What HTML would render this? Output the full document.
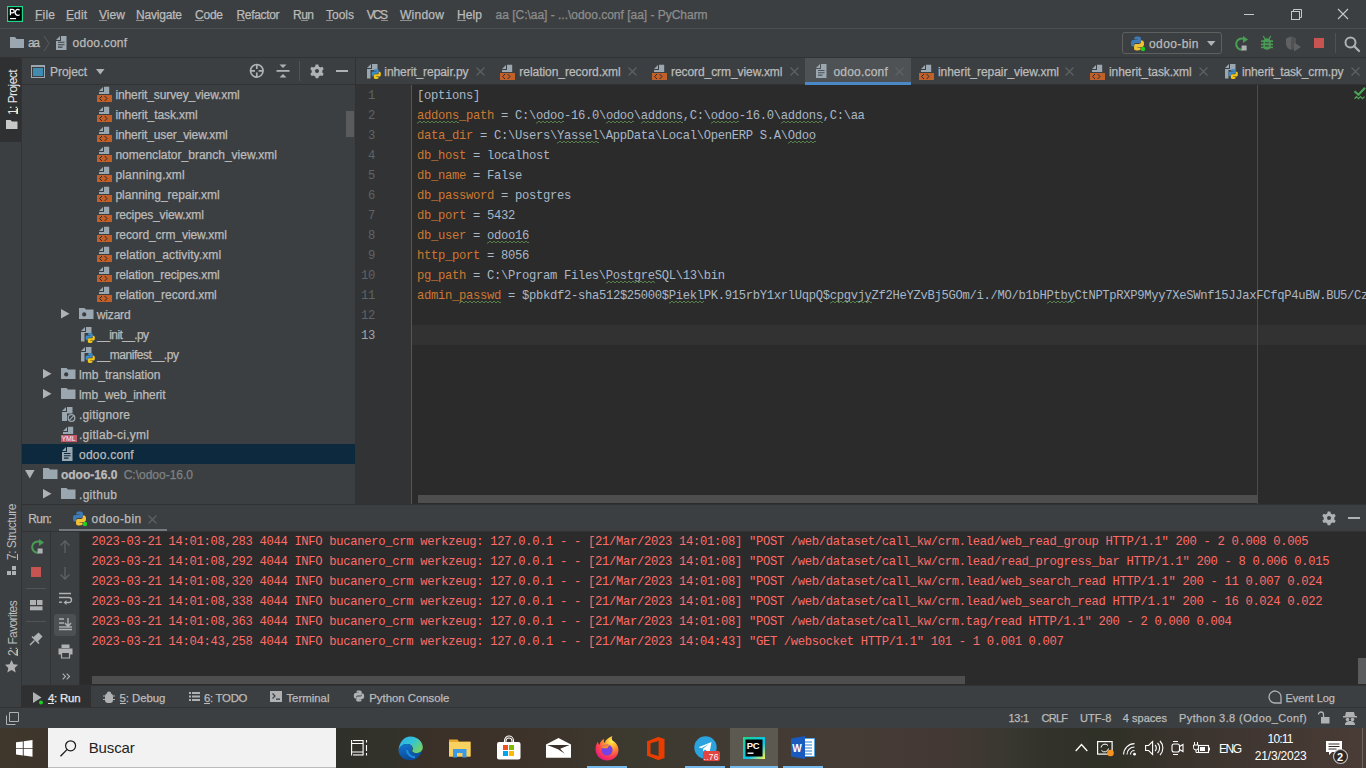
<!DOCTYPE html><html><head><meta charset="utf-8"><style>html,body{margin:0;padding:0;width:1366px;height:768px;overflow:hidden;background:#3c3f41;}.a{position:absolute;}.t{white-space:pre;}.s{-webkit-text-stroke:0.25px currentColor;}svg{overflow:visible;}</style></head><body><div class="a" style="left:0px;top:0px;width:1366px;height:28px;background:#3c3f41;"></div>
<div class="a" style="left:0px;top:28px;width:1366px;height:1px;background:#4b4d4f;"></div>
<svg class="a" style="left:7px;top:6px;" width="16" height="16" viewBox="0 0 16 16"><rect x="0.6" y="0.6" width="14.8" height="14.8" fill="#000" stroke="#21d789" stroke-width="1.2"/><path d="M3.4 9.3V3.4h2.1a1.75 1.75 0 0 1 0 3.5H3.4" fill="none" stroke="#fff" stroke-width="1.3"/><path d="M12.6 4.2A2.6 3 0 1 0 12.6 8.6" fill="none" stroke="#fff" stroke-width="1.3"/><rect x="3" y="12" width="6" height="1.2" fill="#fff"/></svg>
<div class="a t s " style="left:35.0px;top:-5.16px;font:12px/40px 'Liberation Sans',sans-serif;color:#bbbbbb;letter-spacing:0.227px;">File</div>
<div class="a" style="left:35.0px;top:20px;width:7.6px;height:1px;background:#8f8f8f;"></div>
<div class="a t s " style="left:66.0px;top:-5.16px;font:12px/40px 'Liberation Sans',sans-serif;color:#bbbbbb;letter-spacing:0.100px;">Edit</div>
<div class="a" style="left:66.0px;top:20px;width:8.1px;height:1px;background:#8f8f8f;"></div>
<div class="a t s " style="left:99.0px;top:-5.16px;font:12px/40px 'Liberation Sans',sans-serif;color:#bbbbbb;letter-spacing:0.067px;">View</div>
<div class="a" style="left:99.0px;top:20px;width:8.1px;height:1px;background:#8f8f8f;"></div>
<div class="a t s " style="left:136.0px;top:-5.16px;font:12px/40px 'Liberation Sans',sans-serif;color:#bbbbbb;letter-spacing:-0.191px;">Navigate</div>
<div class="a" style="left:136.0px;top:20px;width:8.4px;height:1px;background:#8f8f8f;"></div>
<div class="a t s " style="left:195.0px;top:-5.16px;font:12px/40px 'Liberation Sans',sans-serif;color:#bbbbbb;letter-spacing:-0.227px;">Code</div>
<div class="a" style="left:195.0px;top:20px;width:8.5px;height:1px;background:#8f8f8f;"></div>
<div class="a t s " style="left:236.5px;top:-5.16px;font:12px/40px 'Liberation Sans',sans-serif;color:#bbbbbb;letter-spacing:-0.337px;">Refactor</div>
<div class="a" style="left:236.5px;top:20px;width:8.2px;height:1px;background:#8f8f8f;"></div>
<div class="a t s " style="left:293.0px;top:-5.16px;font:12px/40px 'Liberation Sans',sans-serif;color:#bbbbbb;letter-spacing:-0.510px;">Run</div>
<div class="a" style="left:301.3px;top:20px;width:6.4px;height:1px;background:#8f8f8f;"></div>
<div class="a t s " style="left:326.0px;top:-5.16px;font:12px/40px 'Liberation Sans',sans-serif;color:#bbbbbb;letter-spacing:-0.005px;">Tools</div>
<div class="a" style="left:326.0px;top:20px;width:7.3px;height:1px;background:#8f8f8f;"></div>
<div class="a t s " style="left:366.7px;top:-5.16px;font:12px/40px 'Liberation Sans',sans-serif;color:#bbbbbb;letter-spacing:-1.680px;">VCS</div>
<div class="a" style="left:381.1px;top:20px;width:6.9px;height:1px;background:#8f8f8f;"></div>
<div class="a t s " style="left:400.0px;top:-5.16px;font:12px/40px 'Liberation Sans',sans-serif;color:#bbbbbb;letter-spacing:0.256px;">Window</div>
<div class="a" style="left:400.0px;top:20px;width:11.7px;height:1px;background:#8f8f8f;"></div>
<div class="a t s " style="left:457.0px;top:-5.16px;font:12px/40px 'Liberation Sans',sans-serif;color:#bbbbbb;letter-spacing:0.113px;">Help</div>
<div class="a" style="left:457.0px;top:20px;width:8.8px;height:1px;background:#8f8f8f;"></div>
<div class="a t s " style="left:495.6px;top:-5.16px;font:12px/40px 'Liberation Sans',sans-serif;color:#8d8d8d;letter-spacing:-0.019px;">aa [C:\aa] - ...\odoo.conf [aa] - PyCharm</div>
<svg class="a" style="left:1240px;top:5px;" width="120" height="20" viewBox="0 0 120 20"><line x1="4" y1="9.5" x2="14" y2="9.5" stroke="#c8c8c8" stroke-width="1"/><rect x="51.5" y="6.5" width="8" height="8" fill="none" stroke="#c8c8c8"/><path d="M53.5 6.5V4.5h8v8h-2" fill="none" stroke="#c8c8c8"/><path d="M98 4L108 14M108 4L98 14" stroke="#c8c8c8" stroke-width="1.1"/></svg>
<div class="a" style="left:0px;top:29px;width:1366px;height:28px;background:#3c3f41;"></div>
<div class="a" style="left:0px;top:57px;width:1366px;height:1px;background:#323232;"></div>
<svg class="a" style="left:10px;top:36px;" width="15" height="13" viewBox="0 0 15 13"><path d="M0 1h5l1.6 2H14v9H0z" fill="#9aa7b0"/></svg>
<div class="a t s " style="left:28.0px;top:23.34px;font:12px/40px 'Liberation Sans',sans-serif;color:#bbbbbb;letter-spacing:-1.380px;">aa</div>
<svg class="a" style="left:43px;top:35px;" width="8" height="17" viewBox="0 0 8 17"><path d="M1 1L6 8.5L1 16" fill="none" stroke="#5a5d5f" stroke-width="1"/></svg>
<svg class="a" style="left:56px;top:36px;" width="11" height="15" viewBox="0 0 11 15"><path d="M0 4L4 0V4z" fill="#9aa7b0"/><path d="M5 0H10.5V14H0V5H5z" fill="#9aa7b0"/><path d="M2 6.3h6.5M2 8.7h6.5M2 11.1h4.5" stroke="#3c3f41" stroke-width="1.1"/></svg>
<div class="a t s " style="left:72.6px;top:23.34px;font:12px/40px 'Liberation Sans',sans-serif;color:#bbbbbb;letter-spacing:0.220px;">odoo.conf</div>
<div class="a" style="left:1122px;top:32px;width:100px;height:22px;background:transparent;box-sizing:border-box;border:1px solid #5e6060;border-radius:3px;"></div>
<svg class="a" style="left:1129.5px;top:35.5px;" width="16" height="16" viewBox="0 0 16 16"><g transform="scale(1.0)"><path d="M7.4 0.5C4.2 0.5 4.4 1.9 4.4 1.9V3.4h3.1v.5H3.2S1 3.6 1 7.2s1.9 3.4 1.9 3.4h1.2V8.9s-.1-1.9 1.9-1.9h3.1s1.8 0 1.8-1.8V2.3S11.2 0.5 7.4 0.5z" fill="#3e7ab5"/><path d="M7.6 14.5c3.2 0 3-1.4 3-1.4v-1.5H7.5v-.5h4.3S14 11.4 14 7.8s-1.9-3.4-1.9-3.4h-1.2v1.7s.1 1.9-1.9 1.9H5.9S4.1 8 4.1 9.8v2.9s-.3 1.8 3.5 1.8z" fill="#f1c232"/><circle cx="13" cy="13" r="2.2" fill="#1ad31a"/></g></svg>
<div class="a t s " style="left:1149.0px;top:23.84px;font:12px/40px 'Liberation Sans',sans-serif;color:#bbbbbb;letter-spacing:0.403px;">odoo-bin</div>
<svg class="a" style="left:1207px;top:41px;" width="9" height="6" viewBox="0 0 9 6"><path d="M0 0h8.5L4.25 5z" fill="#afb1b3"/></svg>
<svg class="a" style="left:1234px;top:35.5px;" width="16" height="16" viewBox="0 0 16 16"><path d="M10.5 3.2A5.6 5.6 0 1 0 8.6 13.6" fill="none" stroke="#499c54" stroke-width="2"/><path d="M9 0l5 3.6-5 3.4z" fill="#499c54"/><rect x="7.6" y="9.5" width="5" height="5" fill="#afb1b3"/></svg>
<svg class="a" style="left:1261px;top:35px;" width="12" height="16" viewBox="0 0 12 16"><path d="M2.2 1L4 3.8M9.8 1L8 3.8" stroke="#499c54" stroke-width="1.3"/><rect x="2.4" y="3.3" width="7.2" height="11.5" rx="3.6" fill="#499c54"/><rect x="0" y="5.3" width="12" height="1.6" fill="#499c54"/><rect x="0" y="8.6" width="12" height="1.6" fill="#499c54"/><rect x="0" y="11.6" width="12" height="1.6" fill="#499c54"/><path d="M4 7.7h4M4 10.9h4" stroke="#3c3f41" stroke-width="1.1"/></svg>
<svg class="a" style="left:1285px;top:36px;" width="17" height="16" viewBox="0 0 17 16"><path d="M1 2.5L6 0.5l5 2v5c0 3.5-2.5 5.5-5 6.5C3.5 13 1 11 1 7.5z" fill="#5f6163"/><path d="M6 0.5l5 2v5c0 3.5-2.5 5.5-5 6.5z" fill="#4f5153"/><path d="M9 6.5l7 4.5-7 4.5z" fill="#5f6163"/></svg>
<div class="a" style="left:1314px;top:38px;width:10px;height:10px;background:#c75450;"></div>
<div class="a" style="left:1335px;top:33px;width:1px;height:20px;background:#515151;"></div>
<svg class="a" style="left:1344px;top:36px;" width="17" height="16" viewBox="0 0 17 16"><circle cx="6.5" cy="6.5" r="5" fill="none" stroke="#afb1b3" stroke-width="2"/><path d="M10 10l5 5" stroke="#afb1b3" stroke-width="2.3" stroke-linecap="round"/></svg>
<div class="a" style="left:0px;top:58px;width:21px;height:650px;background:#3c3f41;"></div>
<div class="a" style="left:21px;top:58px;width:1px;height:650px;background:#323232;"></div>
<div class="a" style="left:0px;top:58px;width:21px;height:84px;background:#2e3032;"></div>
<div class="a t" style="left:6px;top:115px;font:12px/14px 'Liberation Sans',sans-serif;color:#e8e8e8;letter-spacing:-0.569px;transform-origin:0 0;transform:rotate(-90deg);">1: Project</div>
<div class="a" style="left:17px;top:107.5px;width:1px;height:6.5px;background:#e8e8e8;"></div>
<svg class="a" style="left:6px;top:120px;" width="12" height="9" viewBox="0 0 12 9"><path d="M0 0h4.5l1.5 1.6H11.5V9H0z" fill="#c8c8c8"/></svg>
<div class="a t" style="left:5px;top:560px;font:12px/14px 'Liberation Sans',sans-serif;color:#bbbbbb;letter-spacing:-0.502px;transform-origin:0 0;transform:rotate(-90deg);">7: Structure</div>
<div class="a" style="left:17px;top:553.5px;width:1px;height:6px;background:#bbbbbb;"></div>
<svg class="a" style="left:7px;top:566px;" width="10" height="9" viewBox="0 0 10 9"><g fill="#afb1b3"><rect x="5" y="0" width="4" height="4"/><rect x="0" y="5" width="4" height="4"/><rect x="5" y="5" width="4" height="4"/></g></svg>
<div class="a t" style="left:6px;top:656px;font:12px/14px 'Liberation Sans',sans-serif;color:#bbbbbb;letter-spacing:-0.641px;transform-origin:0 0;transform:rotate(-90deg);">2: Favorites</div>
<div class="a" style="left:17px;top:649px;width:1px;height:6.5px;background:#bbbbbb;"></div>
<svg class="a" style="left:5px;top:660px;" width="14" height="13" viewBox="0 0 14 13"><path d="M6.5 0l2 4.3 4.6.5-3.4 3.1 1 4.6-4.2-2.4-4.2 2.4 1-4.6L0 4.8l4.6-.5z" fill="#afb1b3"/></svg>
<div class="a" style="left:22px;top:58px;width:333px;height:446px;background:#3c3f41;"></div>
<div class="a" style="left:22px;top:84px;width:333px;height:1px;background:#323232;"></div>
<div class="a" style="left:355px;top:58px;width:1px;height:446px;background:#323232;"></div>
<svg class="a" style="left:31px;top:65px;" width="15" height="14" viewBox="0 0 15 14"><rect x="0.5" y="0.5" width="13" height="12" fill="none" stroke="#9aa7b0" stroke-width="1"/><rect x="0" y="0" width="14" height="2" fill="#9aa7b0"/><rect x="2" y="3" width="10" height="8" fill="#418ab0"/></svg>
<div class="a t s " style="left:50.0px;top:51.84px;font:12px/40px 'Liberation Sans',sans-serif;color:#bbbbbb;letter-spacing:-0.053px;">Project</div>
<svg class="a" style="left:96px;top:69px;" width="9" height="6" viewBox="0 0 9 6"><path d="M0 0h8.5L4.25 5.5z" fill="#afb1b3"/></svg>
<svg class="a" style="left:249px;top:63px;" width="16" height="16" viewBox="0 0 16 16"><circle cx="7.8" cy="7.8" r="6.3" fill="none" stroke="#afb1b3" stroke-width="1.7"/><path d="M7.8 1.5V6M7.8 9.6V14M1.5 7.8H6M9.6 7.8H14" stroke="#afb1b3" stroke-width="1.7"/></svg>
<svg class="a" style="left:276px;top:64px;" width="14" height="14" viewBox="0 0 14 14"><path d="M3.5 0.5h7L7 4z" fill="#afb1b3"/><rect x="0.5" y="6" width="13" height="1.8" fill="#afb1b3"/><path d="M3.5 13.5h7L7 10z" fill="#afb1b3"/></svg>
<div class="a" style="left:299px;top:61px;width:1px;height:20px;background:#515355;"></div>
<svg class="a" style="left:309.5px;top:64px;" width="14" height="14" viewBox="0 0 14 14"><g transform="translate(7 7)"><path d="M-1.3-6.5h2.6l.5 1.9 1.7 1 1.9-.6 1.3 2.2-1.4 1.4v2l1.4 1.4-1.3 2.2-1.9-.6-1.7 1-.5 1.9h-2.6l-.5-1.9-1.7-1-1.9.6-1.3-2.2 1.4-1.4v-2l-1.4-1.4 1.3-2.2 1.9.6 1.7-1z" fill="#afb1b3"/><circle r="2" fill="#3c3f41"/></g></svg>
<div class="a" style="left:336px;top:69.5px;width:12px;height:2.2px;background:#afb1b3;"></div>
<div class="a" style="left:22px;top:444px;width:333px;height:20px;background:#0d293e;"></div>
<svg class="a" style="left:97px;top:86px;" width="16" height="16" viewBox="0 0 16 16"><path d="M2 5L6 1V5z" fill="#9aa7b0"/><path d="M7 0.7H12.2V8H2V6H7z" fill="#9aa7b0"/><rect x="0" y="9" width="15" height="7" fill="#c2602a"/><path d="M5 10L2.6 12.5L5 15M7.6 10L10 12.5L7.6 15" fill="none" stroke="#2b2b2b" stroke-width="1"/></svg>
<div class="a t s " style="left:115.4px;top:74.84px;font:12px/40px 'Liberation Sans',sans-serif;color:#bbbbbb;letter-spacing:-0.110px;">inherit_survey_view.xml</div>
<svg class="a" style="left:97px;top:106px;" width="16" height="16" viewBox="0 0 16 16"><path d="M2 5L6 1V5z" fill="#9aa7b0"/><path d="M7 0.7H12.2V8H2V6H7z" fill="#9aa7b0"/><rect x="0" y="9" width="15" height="7" fill="#c2602a"/><path d="M5 10L2.6 12.5L5 15M7.6 10L10 12.5L7.6 15" fill="none" stroke="#2b2b2b" stroke-width="1"/></svg>
<div class="a t s " style="left:115.4px;top:94.84px;font:12px/40px 'Liberation Sans',sans-serif;color:#bbbbbb;letter-spacing:-0.076px;">inherit_task.xml</div>
<svg class="a" style="left:97px;top:126px;" width="16" height="16" viewBox="0 0 16 16"><path d="M2 5L6 1V5z" fill="#9aa7b0"/><path d="M7 0.7H12.2V8H2V6H7z" fill="#9aa7b0"/><rect x="0" y="9" width="15" height="7" fill="#c2602a"/><path d="M5 10L2.6 12.5L5 15M7.6 10L10 12.5L7.6 15" fill="none" stroke="#2b2b2b" stroke-width="1"/></svg>
<div class="a t s " style="left:115.4px;top:114.84px;font:12px/40px 'Liberation Sans',sans-serif;color:#bbbbbb;letter-spacing:-0.121px;">inherit_user_view.xml</div>
<svg class="a" style="left:97px;top:146px;" width="16" height="16" viewBox="0 0 16 16"><path d="M2 5L6 1V5z" fill="#9aa7b0"/><path d="M7 0.7H12.2V8H2V6H7z" fill="#9aa7b0"/><rect x="0" y="9" width="15" height="7" fill="#c2602a"/><path d="M5 10L2.6 12.5L5 15M7.6 10L10 12.5L7.6 15" fill="none" stroke="#2b2b2b" stroke-width="1"/></svg>
<div class="a t s " style="left:115.4px;top:134.84px;font:12px/40px 'Liberation Sans',sans-serif;color:#bbbbbb;letter-spacing:0.008px;">nomenclator_branch_view.xml</div>
<svg class="a" style="left:97px;top:166px;" width="16" height="16" viewBox="0 0 16 16"><path d="M2 5L6 1V5z" fill="#9aa7b0"/><path d="M7 0.7H12.2V8H2V6H7z" fill="#9aa7b0"/><rect x="0" y="9" width="15" height="7" fill="#c2602a"/><path d="M5 10L2.6 12.5L5 15M7.6 10L10 12.5L7.6 15" fill="none" stroke="#2b2b2b" stroke-width="1"/></svg>
<div class="a t s " style="left:115.4px;top:154.84px;font:12px/40px 'Liberation Sans',sans-serif;color:#bbbbbb;letter-spacing:0.175px;">planning.xml</div>
<svg class="a" style="left:97px;top:186px;" width="16" height="16" viewBox="0 0 16 16"><path d="M2 5L6 1V5z" fill="#9aa7b0"/><path d="M7 0.7H12.2V8H2V6H7z" fill="#9aa7b0"/><rect x="0" y="9" width="15" height="7" fill="#c2602a"/><path d="M5 10L2.6 12.5L5 15M7.6 10L10 12.5L7.6 15" fill="none" stroke="#2b2b2b" stroke-width="1"/></svg>
<div class="a t s " style="left:115.4px;top:174.84px;font:12px/40px 'Liberation Sans',sans-serif;color:#bbbbbb;letter-spacing:0.014px;">planning_repair.xml</div>
<svg class="a" style="left:97px;top:206px;" width="16" height="16" viewBox="0 0 16 16"><path d="M2 5L6 1V5z" fill="#9aa7b0"/><path d="M7 0.7H12.2V8H2V6H7z" fill="#9aa7b0"/><rect x="0" y="9" width="15" height="7" fill="#c2602a"/><path d="M5 10L2.6 12.5L5 15M7.6 10L10 12.5L7.6 15" fill="none" stroke="#2b2b2b" stroke-width="1"/></svg>
<div class="a t s " style="left:115.4px;top:194.84px;font:12px/40px 'Liberation Sans',sans-serif;color:#bbbbbb;letter-spacing:-0.148px;">recipes_view.xml</div>
<svg class="a" style="left:97px;top:226px;" width="16" height="16" viewBox="0 0 16 16"><path d="M2 5L6 1V5z" fill="#9aa7b0"/><path d="M7 0.7H12.2V8H2V6H7z" fill="#9aa7b0"/><rect x="0" y="9" width="15" height="7" fill="#c2602a"/><path d="M5 10L2.6 12.5L5 15M7.6 10L10 12.5L7.6 15" fill="none" stroke="#2b2b2b" stroke-width="1"/></svg>
<div class="a t s " style="left:115.4px;top:214.84px;font:12px/40px 'Liberation Sans',sans-serif;color:#bbbbbb;letter-spacing:-0.071px;">record_crm_view.xml</div>
<svg class="a" style="left:97px;top:246px;" width="16" height="16" viewBox="0 0 16 16"><path d="M2 5L6 1V5z" fill="#9aa7b0"/><path d="M7 0.7H12.2V8H2V6H7z" fill="#9aa7b0"/><rect x="0" y="9" width="15" height="7" fill="#c2602a"/><path d="M5 10L2.6 12.5L5 15M7.6 10L10 12.5L7.6 15" fill="none" stroke="#2b2b2b" stroke-width="1"/></svg>
<div class="a t s " style="left:115.4px;top:234.84px;font:12px/40px 'Liberation Sans',sans-serif;color:#bbbbbb;letter-spacing:0.095px;">relation_activity.xml</div>
<svg class="a" style="left:97px;top:266px;" width="16" height="16" viewBox="0 0 16 16"><path d="M2 5L6 1V5z" fill="#9aa7b0"/><path d="M7 0.7H12.2V8H2V6H7z" fill="#9aa7b0"/><rect x="0" y="9" width="15" height="7" fill="#c2602a"/><path d="M5 10L2.6 12.5L5 15M7.6 10L10 12.5L7.6 15" fill="none" stroke="#2b2b2b" stroke-width="1"/></svg>
<div class="a t s " style="left:115.4px;top:254.84px;font:12px/40px 'Liberation Sans',sans-serif;color:#bbbbbb;letter-spacing:-0.128px;">relation_recipes.xml</div>
<svg class="a" style="left:97px;top:286px;" width="16" height="16" viewBox="0 0 16 16"><path d="M2 5L6 1V5z" fill="#9aa7b0"/><path d="M7 0.7H12.2V8H2V6H7z" fill="#9aa7b0"/><rect x="0" y="9" width="15" height="7" fill="#c2602a"/><path d="M5 10L2.6 12.5L5 15M7.6 10L10 12.5L7.6 15" fill="none" stroke="#2b2b2b" stroke-width="1"/></svg>
<div class="a t s " style="left:115.4px;top:274.84px;font:12px/40px 'Liberation Sans',sans-serif;color:#bbbbbb;letter-spacing:-0.037px;">relation_record.xml</div>
<svg class="a" style="left:79px;top:308px;" width="15" height="11" viewBox="0 0 15 11"><path d="M0 0h5.5l1.5 1.6H14.5V11H0z" fill="#9aa7b0"/><circle cx="5.2" cy="6.4" r="2.1" fill="#3a3d3f"/></svg>
<svg class="a" style="left:61px;top:309px;" width="9" height="10" viewBox="0 0 9 10"><path d="M0 0L8.5 4.8L0 9.6z" fill="#afb1b3"/></svg>
<div class="a t s " style="left:96.86px;top:294.84px;font:12px/40px 'Liberation Sans',sans-serif;color:#bbbbbb;letter-spacing:-0.188px;">wizard</div>
<svg class="a" style="left:81px;top:327px;" width="14" height="16" viewBox="0 0 14 16"><path d="M0 4L4 0V4z" fill="#9aa7b0"/><path d="M5 0H10.5V6H3.5V14.5H0V5H5z" fill="#9aa7b0"/></svg>
<svg class="a" style="left:84.5px;top:332.8px" width="10.5" height="10" viewBox="1 0.5 13 14"><path d="M7.4 0.5C4.2 0.5 4.4 1.9 4.4 1.9V3.4h3.1v.5H3.2S1 3.6 1 7.2s1.9 3.4 1.9 3.4h1.2V8.9s-.1-1.9 1.9-1.9h3.1s1.8 0 1.8-1.8V2.3S11.2 0.5 7.4 0.5z" fill="#3e8ac6"/><path d="M7.6 14.5c3.2 0 3-1.4 3-1.4v-1.5H7.5v-.5h4.3S14 11.4 14 7.8s-1.9-3.4-1.9-3.4h-1.2v1.7s.1 1.9-1.9 1.9H5.9S4.1 8 4.1 9.8v2.9s-.3 1.8 3.5 1.8z" fill="#f0c419"/></svg>
<div class="a t s " style="left:97.24px;top:314.84px;font:12px/40px 'Liberation Sans',sans-serif;color:#bbbbbb;letter-spacing:-0.626px;">__init__.py</div>
<svg class="a" style="left:81px;top:347px;" width="14" height="16" viewBox="0 0 14 16"><path d="M0 4L4 0V4z" fill="#9aa7b0"/><path d="M5 0H10.5V6H3.5V14.5H0V5H5z" fill="#9aa7b0"/></svg>
<svg class="a" style="left:84.5px;top:352.8px" width="10.5" height="10" viewBox="1 0.5 13 14"><path d="M7.4 0.5C4.2 0.5 4.4 1.9 4.4 1.9V3.4h3.1v.5H3.2S1 3.6 1 7.2s1.9 3.4 1.9 3.4h1.2V8.9s-.1-1.9 1.9-1.9h3.1s1.8 0 1.8-1.8V2.3S11.2 0.5 7.4 0.5z" fill="#3e8ac6"/><path d="M7.6 14.5c3.2 0 3-1.4 3-1.4v-1.5H7.5v-.5h4.3S14 11.4 14 7.8s-1.9-3.4-1.9-3.4h-1.2v1.7s.1 1.9-1.9 1.9H5.9S4.1 8 4.1 9.8v2.9s-.3 1.8 3.5 1.8z" fill="#f0c419"/></svg>
<div class="a t s " style="left:97.24px;top:334.84px;font:12px/40px 'Liberation Sans',sans-serif;color:#bbbbbb;letter-spacing:-0.451px;">__manifest__.py</div>
<svg class="a" style="left:61px;top:368px;" width="15" height="11" viewBox="0 0 15 11"><path d="M0 0h5.5l1.5 1.6H14.5V11H0z" fill="#9aa7b0"/><circle cx="5.2" cy="6.4" r="2.1" fill="#3a3d3f"/></svg>
<svg class="a" style="left:43px;top:369px;" width="9" height="10" viewBox="0 0 9 10"><path d="M0 0L8.5 4.8L0 9.6z" fill="#afb1b3"/></svg>
<div class="a t s " style="left:79.0px;top:354.84px;font:12px/40px 'Liberation Sans',sans-serif;color:#bbbbbb;letter-spacing:0.003px;">lmb_translation</div>
<svg class="a" style="left:61px;top:388px;" width="15" height="11" viewBox="0 0 15 11"><path d="M0 0h5.5l1.5 1.6H14.5V11H0z" fill="#9aa7b0"/></svg>
<svg class="a" style="left:43px;top:389px;" width="9" height="10" viewBox="0 0 9 10"><path d="M0 0L8.5 4.8L0 9.6z" fill="#afb1b3"/></svg>
<div class="a t s " style="left:79.0px;top:374.84px;font:12px/40px 'Liberation Sans',sans-serif;color:#bbbbbb;letter-spacing:-0.061px;">lmb_web_inherit</div>
<svg class="a" style="left:62px;top:407px;" width="15" height="16" viewBox="0 0 15 16"><path d="M0 4L4 0V4z" fill="#9aa7b0"/><path d="M5 0H10.5V6.5H5V14H0V5H5z" fill="#9aa7b0"/><circle cx="9.5" cy="11" r="3.3" fill="none" stroke="#9aa7b0" stroke-width="1.3"/><path d="M7.2 13.3L11.8 8.7" stroke="#9aa7b0" stroke-width="1.2"/></svg>
<div class="a t s " style="left:79.0px;top:394.84px;font:12px/40px 'Liberation Sans',sans-serif;color:#bbbbbb;letter-spacing:0.180px;">.gitignore</div>
<svg class="a" style="left:61px;top:426px;" width="16" height="16" viewBox="0 0 16 16"><path d="M2 5L6 1V5z" fill="#9aa7b0"/><path d="M7 0.7H12.2V8H2V6H7z" fill="#9aa7b0"/><rect x="0" y="9" width="16" height="7" fill="#c75a6a"/><text x="0.6" y="15.3" font-family="Liberation Sans" font-size="7" fill="#f2f2f2" letter-spacing="-0.2">YML</text></svg>
<div class="a t s " style="left:79.0px;top:414.84px;font:12px/40px 'Liberation Sans',sans-serif;color:#bbbbbb;letter-spacing:0.257px;">.gitlab-ci.yml</div>
<svg class="a" style="left:62px;top:447px;" width="11" height="15" viewBox="0 0 11 15"><path d="M0 4L4 0V4z" fill="#9aa7b0"/><path d="M5 0H10.5V14H0V5H5z" fill="#9aa7b0"/><path d="M2 6.5h6.5M2 8.8h6.5M2 11.1h4.5" stroke="#0d293e" stroke-width="1.1"/></svg>
<div class="a t s " style="left:79.0px;top:434.84px;font:12px/40px 'Liberation Sans',sans-serif;color:#bbbbbb;letter-spacing:0.245px;">odoo.conf</div>
<svg class="a" style="left:43px;top:468px;" width="15" height="11" viewBox="0 0 15 11"><path d="M0 0h5.5l1.5 1.6H14.5V11H0z" fill="#9aa7b0"/></svg>
<svg class="a" style="left:25px;top:470px;" width="10" height="9" viewBox="0 0 10 9"><path d="M0 0H9.6L4.8 8.5z" fill="#afb1b3"/></svg>
<div class="a t s " style="left:61.0px;top:454.84px;font:bold 12px/40px 'Liberation Sans',sans-serif;color:#bbbbbb;letter-spacing:-0.038px;">odoo-16.0</div>
<div class="a t s " style="left:123.7px;top:454.84px;font:12px/40px 'Liberation Sans',sans-serif;color:#7f8284;letter-spacing:-0.005px;">C:\odoo-16.0</div>
<svg class="a" style="left:61px;top:488px;" width="15" height="11" viewBox="0 0 15 11"><path d="M0 0h5.5l1.5 1.6H14.5V11H0z" fill="#9aa7b0"/></svg>
<svg class="a" style="left:43px;top:489px;" width="9" height="10" viewBox="0 0 9 10"><path d="M0 0L8.5 4.8L0 9.6z" fill="#afb1b3"/></svg>
<div class="a t s " style="left:79.0px;top:474.84px;font:12px/40px 'Liberation Sans',sans-serif;color:#bbbbbb;letter-spacing:0.307px;">.github</div>
<div class="a" style="left:346px;top:111px;width:8px;height:26px;background:#595b5d;"></div>
<div class="a" style="left:356px;top:58px;width:1010px;height:26px;background:#3c3f41;"></div>
<div class="a" style="left:805px;top:58px;width:106px;height:24px;background:#4e5254;"></div>
<div class="a" style="left:805px;top:82px;width:106px;height:3px;background:#4a88c7;"></div>
<div class="a" style="left:356px;top:84px;width:449px;height:1px;background:#323232;"></div>
<div class="a" style="left:911px;top:84px;width:455px;height:1px;background:#323232;"></div>
<svg class="a" style="left:367px;top:63.5px;" width="14" height="16" viewBox="0 0 14 16"><path d="M0 4L4 0V4z" fill="#9aa7b0"/><path d="M5 0H10.5V6H3.5V14.5H0V5H5z" fill="#9aa7b0"/></svg>
<svg class="a" style="left:370.5px;top:69.3px" width="10.5" height="10" viewBox="1 0.5 13 14"><path d="M7.4 0.5C4.2 0.5 4.4 1.9 4.4 1.9V3.4h3.1v.5H3.2S1 3.6 1 7.2s1.9 3.4 1.9 3.4h1.2V8.9s-.1-1.9 1.9-1.9h3.1s1.8 0 1.8-1.8V2.3S11.2 0.5 7.4 0.5z" fill="#3e8ac6"/><path d="M7.6 14.5c3.2 0 3-1.4 3-1.4v-1.5H7.5v-.5h4.3S14 11.4 14 7.8s-1.9-3.4-1.9-3.4h-1.2v1.7s.1 1.9-1.9 1.9H5.9S4.1 8 4.1 9.8v2.9s-.3 1.8 3.5 1.8z" fill="#f0c419"/></svg>
<div class="a t s " style="left:384.3px;top:51.64px;font:12px/40px 'Liberation Sans',sans-serif;color:#bbbbbb;letter-spacing:-0.067px;">inherit_repair.py</div>
<svg class="a" style="left:475.5px;top:67px;" width="9" height="9" viewBox="0 0 9 9"><path d="M0.5 0.5L8.5 8.5M8.5 0.5L0.5 8.5" stroke="#5f6366" stroke-width="1.1"/></svg>
<svg class="a" style="left:500px;top:63.5px;" width="16" height="16" viewBox="0 0 16 16"><path d="M2 5L6 1V5z" fill="#9aa7b0"/><path d="M7 0.7H12.2V8H2V6H7z" fill="#9aa7b0"/><rect x="0" y="9" width="15" height="7" fill="#c2602a"/><path d="M5 10L2.6 12.5L5 15M7.6 10L10 12.5L7.6 15" fill="none" stroke="#2b2b2b" stroke-width="1"/></svg>
<div class="a t s " style="left:519.3px;top:51.64px;font:12px/40px 'Liberation Sans',sans-serif;color:#bbbbbb;letter-spacing:-0.042px;">relation_record.xml</div>
<svg class="a" style="left:628px;top:67px;" width="9" height="9" viewBox="0 0 9 9"><path d="M0.5 0.5L8.5 8.5M8.5 0.5L0.5 8.5" stroke="#5f6366" stroke-width="1.1"/></svg>
<svg class="a" style="left:651.7px;top:63.5px;" width="16" height="16" viewBox="0 0 16 16"><path d="M2 5L6 1V5z" fill="#9aa7b0"/><path d="M7 0.7H12.2V8H2V6H7z" fill="#9aa7b0"/><rect x="0" y="9" width="15" height="7" fill="#c2602a"/><path d="M5 10L2.6 12.5L5 15M7.6 10L10 12.5L7.6 15" fill="none" stroke="#2b2b2b" stroke-width="1"/></svg>
<div class="a t s " style="left:671.0px;top:51.64px;font:12px/40px 'Liberation Sans',sans-serif;color:#bbbbbb;letter-spacing:-0.071px;">record_crm_view.xml</div>
<svg class="a" style="left:790px;top:67px;" width="9" height="9" viewBox="0 0 9 9"><path d="M0.5 0.5L8.5 8.5M8.5 0.5L0.5 8.5" stroke="#5f6366" stroke-width="1.1"/></svg>
<svg class="a" style="left:816px;top:63.5px;" width="11" height="15" viewBox="0 0 11 15"><path d="M0 4L4 0V4z" fill="#9aa7b0"/><path d="M5 0H10.5V14H0V5H5z" fill="#9aa7b0"/><path d="M2 6.5h6.5M2 8.8h6.5M2 11.1h4.5" stroke="#4e5254" stroke-width="1.1"/></svg>
<div class="a t s " style="left:833.5px;top:51.64px;font:12px/40px 'Liberation Sans',sans-serif;color:#bbbbbb;letter-spacing:0.195px;">odoo.conf</div>
<svg class="a" style="left:895.4px;top:67px;" width="9" height="9" viewBox="0 0 9 9"><path d="M0.5 0.5L8.5 8.5M8.5 0.5L0.5 8.5" stroke="#5f6366" stroke-width="1.1"/></svg>
<svg class="a" style="left:919px;top:63.5px;" width="16" height="16" viewBox="0 0 16 16"><path d="M2 5L6 1V5z" fill="#9aa7b0"/><path d="M7 0.7H12.2V8H2V6H7z" fill="#9aa7b0"/><rect x="0" y="9" width="15" height="7" fill="#c2602a"/><path d="M5 10L2.6 12.5L5 15M7.6 10L10 12.5L7.6 15" fill="none" stroke="#2b2b2b" stroke-width="1"/></svg>
<div class="a t s " style="left:938.0px;top:51.64px;font:12px/40px 'Liberation Sans',sans-serif;color:#bbbbbb;letter-spacing:-0.047px;">inherit_repair_view.xml</div>
<svg class="a" style="left:1065px;top:67px;" width="9" height="9" viewBox="0 0 9 9"><path d="M0.5 0.5L8.5 8.5M8.5 0.5L0.5 8.5" stroke="#5f6366" stroke-width="1.1"/></svg>
<svg class="a" style="left:1090px;top:63.5px;" width="16" height="16" viewBox="0 0 16 16"><path d="M2 5L6 1V5z" fill="#9aa7b0"/><path d="M7 0.7H12.2V8H2V6H7z" fill="#9aa7b0"/><rect x="0" y="9" width="15" height="7" fill="#c2602a"/><path d="M5 10L2.6 12.5L5 15M7.6 10L10 12.5L7.6 15" fill="none" stroke="#2b2b2b" stroke-width="1"/></svg>
<div class="a t s " style="left:1109.0px;top:51.64px;font:12px/40px 'Liberation Sans',sans-serif;color:#bbbbbb;letter-spacing:-0.049px;">inherit_task.xml</div>
<svg class="a" style="left:1198.6px;top:67px;" width="9" height="9" viewBox="0 0 9 9"><path d="M0.5 0.5L8.5 8.5M8.5 0.5L0.5 8.5" stroke="#5f6366" stroke-width="1.1"/></svg>
<svg class="a" style="left:1224.7px;top:63.5px;" width="14" height="16" viewBox="0 0 14 16"><path d="M0 4L4 0V4z" fill="#9aa7b0"/><path d="M5 0H10.5V6H3.5V14.5H0V5H5z" fill="#9aa7b0"/></svg>
<svg class="a" style="left:1228.2px;top:69.3px" width="10.5" height="10" viewBox="1 0.5 13 14"><path d="M7.4 0.5C4.2 0.5 4.4 1.9 4.4 1.9V3.4h3.1v.5H3.2S1 3.6 1 7.2s1.9 3.4 1.9 3.4h1.2V8.9s-.1-1.9 1.9-1.9h3.1s1.8 0 1.8-1.8V2.3S11.2 0.5 7.4 0.5z" fill="#3e8ac6"/><path d="M7.6 14.5c3.2 0 3-1.4 3-1.4v-1.5H7.5v-.5h4.3S14 11.4 14 7.8s-1.9-3.4-1.9-3.4h-1.2v1.7s.1 1.9-1.9 1.9H5.9S4.1 8 4.1 9.8v2.9s-.3 1.8 3.5 1.8z" fill="#f0c419"/></svg>
<div class="a t s " style="left:1242.0px;top:51.64px;font:12px/40px 'Liberation Sans',sans-serif;color:#bbbbbb;letter-spacing:-0.136px;">inherit_task_crm.py</div>
<svg class="a" style="left:1351px;top:67px;" width="9" height="9" viewBox="0 0 9 9"><path d="M0.5 0.5L8.5 8.5M8.5 0.5L0.5 8.5" stroke="#5f6366" stroke-width="1.1"/></svg>
<div class="a" style="left:356px;top:85px;width:55px;height:419px;background:#313335;"></div>
<div class="a" style="left:411px;top:85px;width:1px;height:419px;background:#555555;"></div>
<div class="a" style="left:412px;top:85px;width:954px;height:419px;background:#2b2b2b;"></div>
<div class="a" style="left:412px;top:325px;width:954px;height:20px;background:#323232;"></div>
<div class="a" style="left:1257px;top:85px;width:1px;height:419px;background:#4b4b4b;"></div>
<div class="a" style="left:418px;top:495px;width:839px;height:8px;background:#4e4e4e;"></div>
<svg class="a" style="left:1353px;top:87px;" width="14" height="13" viewBox="0 0 14 13"><path d="M1.5 4.2L5.5 7.8L12 0.8" fill="none" stroke="#4ca256" stroke-width="2.2"/><path d="M1.5 11.8L3.5 9.6L5.5 11.6L7.5 9.6L9.5 11.6L11.5 9.6" fill="none" stroke="#4ca256" stroke-width="1.3"/></svg>
<div class="a t  " style="left:368.0px;top:75.75px;font:12.2px/40px 'Liberation Mono',monospace;color:#606366;">1</div>
<div class="a t  " style="left:417px;top:75.75px;font:12.2px/40px 'Liberation Mono',monospace;color:#a9b7c6;letter-spacing:-0.3210px;">[options]</div>
<div class="a t  " style="left:368.0px;top:95.75px;font:12.2px/40px 'Liberation Mono',monospace;color:#606366;">2</div>
<div class="a t  " style="left:417px;top:95.75px;font:12.2px/40px 'Liberation Mono',monospace;color:#cc7832;letter-spacing:-0.3210px;">addons_path</div>
<div class="a t  " style="left:494.0px;top:95.75px;font:12.2px/40px 'Liberation Mono',monospace;color:#a9b7c6;letter-spacing:-0.3210px;"> = C:\odoo-16.0\odoo\addons,C:\odoo-16.0\addons,C:\aa</div>
<div class="a t  " style="left:368.0px;top:115.75px;font:12.2px/40px 'Liberation Mono',monospace;color:#606366;">3</div>
<div class="a t  " style="left:417px;top:115.75px;font:12.2px/40px 'Liberation Mono',monospace;color:#cc7832;letter-spacing:-0.3210px;">data_dir</div>
<div class="a t  " style="left:473.0px;top:115.75px;font:12.2px/40px 'Liberation Mono',monospace;color:#a9b7c6;letter-spacing:-0.3210px;"> = C:\Users\Yassel\AppData\Local\OpenERP S.A\Odoo</div>
<div class="a t  " style="left:368.0px;top:135.75px;font:12.2px/40px 'Liberation Mono',monospace;color:#606366;">4</div>
<div class="a t  " style="left:417px;top:135.75px;font:12.2px/40px 'Liberation Mono',monospace;color:#cc7832;letter-spacing:-0.3210px;">db_host</div>
<div class="a t  " style="left:466.0px;top:135.75px;font:12.2px/40px 'Liberation Mono',monospace;color:#a9b7c6;letter-spacing:-0.3210px;"> = localhost</div>
<div class="a t  " style="left:368.0px;top:155.75px;font:12.2px/40px 'Liberation Mono',monospace;color:#606366;">5</div>
<div class="a t  " style="left:417px;top:155.75px;font:12.2px/40px 'Liberation Mono',monospace;color:#cc7832;letter-spacing:-0.3210px;">db_name</div>
<div class="a t  " style="left:466.0px;top:155.75px;font:12.2px/40px 'Liberation Mono',monospace;color:#a9b7c6;letter-spacing:-0.3210px;"> = False</div>
<div class="a t  " style="left:368.0px;top:175.75px;font:12.2px/40px 'Liberation Mono',monospace;color:#606366;">6</div>
<div class="a t  " style="left:417px;top:175.75px;font:12.2px/40px 'Liberation Mono',monospace;color:#cc7832;letter-spacing:-0.3210px;">db_password</div>
<div class="a t  " style="left:494.0px;top:175.75px;font:12.2px/40px 'Liberation Mono',monospace;color:#a9b7c6;letter-spacing:-0.3210px;"> = postgres</div>
<div class="a t  " style="left:368.0px;top:195.75px;font:12.2px/40px 'Liberation Mono',monospace;color:#606366;">7</div>
<div class="a t  " style="left:417px;top:195.75px;font:12.2px/40px 'Liberation Mono',monospace;color:#cc7832;letter-spacing:-0.3210px;">db_port</div>
<div class="a t  " style="left:466.0px;top:195.75px;font:12.2px/40px 'Liberation Mono',monospace;color:#a9b7c6;letter-spacing:-0.3210px;"> = 5432</div>
<div class="a t  " style="left:368.0px;top:215.75px;font:12.2px/40px 'Liberation Mono',monospace;color:#606366;">8</div>
<div class="a t  " style="left:417px;top:215.75px;font:12.2px/40px 'Liberation Mono',monospace;color:#cc7832;letter-spacing:-0.3210px;">db_user</div>
<div class="a t  " style="left:466.0px;top:215.75px;font:12.2px/40px 'Liberation Mono',monospace;color:#a9b7c6;letter-spacing:-0.3210px;"> = odoo16</div>
<div class="a t  " style="left:368.0px;top:235.75px;font:12.2px/40px 'Liberation Mono',monospace;color:#606366;">9</div>
<div class="a t  " style="left:417px;top:235.75px;font:12.2px/40px 'Liberation Mono',monospace;color:#cc7832;letter-spacing:-0.3210px;">http_port</div>
<div class="a t  " style="left:480.0px;top:235.75px;font:12.2px/40px 'Liberation Mono',monospace;color:#a9b7c6;letter-spacing:-0.3210px;"> = 8056</div>
<div class="a t  " style="left:361.0px;top:255.75px;font:12.2px/40px 'Liberation Mono',monospace;color:#606366;letter-spacing:-0.3210px;">10</div>
<div class="a t  " style="left:417px;top:255.75px;font:12.2px/40px 'Liberation Mono',monospace;color:#cc7832;letter-spacing:-0.3210px;">pg_path</div>
<div class="a t  " style="left:466.0px;top:255.75px;font:12.2px/40px 'Liberation Mono',monospace;color:#a9b7c6;letter-spacing:-0.3210px;"> = C:\Program Files\PostgreSQL\13\bin</div>
<div class="a t  " style="left:361.0px;top:275.75px;font:12.2px/40px 'Liberation Mono',monospace;color:#606366;letter-spacing:-0.3210px;">11</div>
<div class="a t  " style="left:417px;top:275.75px;font:12.2px/40px 'Liberation Mono',monospace;color:#cc7832;letter-spacing:-0.3210px;">admin_passwd</div>
<div class="a t  " style="left:501.0px;top:275.75px;font:12.2px/40px 'Liberation Mono',monospace;color:#a9b7c6;letter-spacing:-0.3210px;"> = $pbkdf2-sha512$25000$PieklPK.915rbY1xrlUqpQ$cpgvjyZf2HeYZvBj5GOm/i./MO/b1bHPtbyCtNPTpRXP9Myy7XeSWnf15JJaxFCfqP4uBW.BU5/Cz</div>
<div class="a t  " style="left:361.0px;top:295.75px;font:12.2px/40px 'Liberation Mono',monospace;color:#606366;letter-spacing:-0.3210px;">12</div>
<div class="a t  " style="left:361.0px;top:315.75px;font:12.2px/40px 'Liberation Mono',monospace;color:#a4a3a3;letter-spacing:-0.3210px;">13</div>
<svg class="a" style="left:417.0px;top:121px;overflow:hidden;" width="42.0" height="3" viewBox="0 0 42.0 3"><path d="M0 2L1 2L3 0L5 2L7 0L9 2L11 0L13 2L15 0L17 2L19 0L21 2L23 0L25 2L27 0L29 2L31 0L33 2L35 0L37 2L39 0L41 2L43 0L45 2L47 0L49 2L51 0L53 2L55 0L57 2L59 0L61 2L63 0L65 2L67 0L69 2L71 0L73 2L75 0L77 2L79 0L81 2L83 0L85 2L87 0L89 2L91 0L93 2L95 0L97 2L99 0L101 2L103 0L105 2L107 0L109 2L111 0L113 2L115 0L117 2L119 0L121 2L123 0L125 2L127 0L129 2L131 0L133 2L135 0L137 2L139 0L141 2L143 0L145 2L147 0L149 2L151 0L153 2L155 0L157 2L159 0L161 2L163 0L165 2L167 0L169 2L171 0L173 2L175 0L177 2L179 0L181 2L183 0L185 2L187 0L189 2L191 0L193 2L195 0L197 2L199 0L201 2L203 0L205 2L207 0L209 2L211 0L213 2L215 0L217 2L219 0L221 2L223 0L225 2L227 0L229 2L231 0L233 2L235 0L237 2L239 0L241 2L243 0L245 2L247 0L249 2L251 0L253 2L255 0L257 2L259 0L261 2L263 0L265 2L267 0L269 2L271 0L273 2L275 0L277 2L279 0L281 2L283 0L285 2L287 0L289 2L291 0L293 2L295 0L297 2L299 0L301 2L303 0L305 2L307 0L309 2L311 0L313 2L315 0L317 2L319 0L321 2L323 0L325 2L327 0L329 2L331 0L333 2L335 0L337 2L339 0L341 2L343 0L345 2L347 0L349 2L351 0L353 2L355 0L357 2L359 0L361 2L363 0L365 2L367 0L369 2L371 0L373 2L375 0L377 2L379 0L381 2L383 0L385 2L387 0L389 2L391 0L393 2L395 0L397 2L399 0" fill="none" stroke="#5d8a4e" stroke-width="0.9"/></svg>
<svg class="a" style="left:536.0px;top:121px;overflow:hidden;" width="28.0" height="3" viewBox="0 0 28.0 3"><path d="M0 2L1 2L3 0L5 2L7 0L9 2L11 0L13 2L15 0L17 2L19 0L21 2L23 0L25 2L27 0L29 2L31 0L33 2L35 0L37 2L39 0L41 2L43 0L45 2L47 0L49 2L51 0L53 2L55 0L57 2L59 0L61 2L63 0L65 2L67 0L69 2L71 0L73 2L75 0L77 2L79 0L81 2L83 0L85 2L87 0L89 2L91 0L93 2L95 0L97 2L99 0L101 2L103 0L105 2L107 0L109 2L111 0L113 2L115 0L117 2L119 0L121 2L123 0L125 2L127 0L129 2L131 0L133 2L135 0L137 2L139 0L141 2L143 0L145 2L147 0L149 2L151 0L153 2L155 0L157 2L159 0L161 2L163 0L165 2L167 0L169 2L171 0L173 2L175 0L177 2L179 0L181 2L183 0L185 2L187 0L189 2L191 0L193 2L195 0L197 2L199 0L201 2L203 0L205 2L207 0L209 2L211 0L213 2L215 0L217 2L219 0L221 2L223 0L225 2L227 0L229 2L231 0L233 2L235 0L237 2L239 0L241 2L243 0L245 2L247 0L249 2L251 0L253 2L255 0L257 2L259 0L261 2L263 0L265 2L267 0L269 2L271 0L273 2L275 0L277 2L279 0L281 2L283 0L285 2L287 0L289 2L291 0L293 2L295 0L297 2L299 0L301 2L303 0L305 2L307 0L309 2L311 0L313 2L315 0L317 2L319 0L321 2L323 0L325 2L327 0L329 2L331 0L333 2L335 0L337 2L339 0L341 2L343 0L345 2L347 0L349 2L351 0L353 2L355 0L357 2L359 0L361 2L363 0L365 2L367 0L369 2L371 0L373 2L375 0L377 2L379 0L381 2L383 0L385 2L387 0L389 2L391 0L393 2L395 0L397 2L399 0" fill="none" stroke="#5d8a4e" stroke-width="0.9"/></svg>
<svg class="a" style="left:606.0px;top:121px;overflow:hidden;" width="28.0" height="3" viewBox="0 0 28.0 3"><path d="M0 2L1 2L3 0L5 2L7 0L9 2L11 0L13 2L15 0L17 2L19 0L21 2L23 0L25 2L27 0L29 2L31 0L33 2L35 0L37 2L39 0L41 2L43 0L45 2L47 0L49 2L51 0L53 2L55 0L57 2L59 0L61 2L63 0L65 2L67 0L69 2L71 0L73 2L75 0L77 2L79 0L81 2L83 0L85 2L87 0L89 2L91 0L93 2L95 0L97 2L99 0L101 2L103 0L105 2L107 0L109 2L111 0L113 2L115 0L117 2L119 0L121 2L123 0L125 2L127 0L129 2L131 0L133 2L135 0L137 2L139 0L141 2L143 0L145 2L147 0L149 2L151 0L153 2L155 0L157 2L159 0L161 2L163 0L165 2L167 0L169 2L171 0L173 2L175 0L177 2L179 0L181 2L183 0L185 2L187 0L189 2L191 0L193 2L195 0L197 2L199 0L201 2L203 0L205 2L207 0L209 2L211 0L213 2L215 0L217 2L219 0L221 2L223 0L225 2L227 0L229 2L231 0L233 2L235 0L237 2L239 0L241 2L243 0L245 2L247 0L249 2L251 0L253 2L255 0L257 2L259 0L261 2L263 0L265 2L267 0L269 2L271 0L273 2L275 0L277 2L279 0L281 2L283 0L285 2L287 0L289 2L291 0L293 2L295 0L297 2L299 0L301 2L303 0L305 2L307 0L309 2L311 0L313 2L315 0L317 2L319 0L321 2L323 0L325 2L327 0L329 2L331 0L333 2L335 0L337 2L339 0L341 2L343 0L345 2L347 0L349 2L351 0L353 2L355 0L357 2L359 0L361 2L363 0L365 2L367 0L369 2L371 0L373 2L375 0L377 2L379 0L381 2L383 0L385 2L387 0L389 2L391 0L393 2L395 0L397 2L399 0" fill="none" stroke="#5d8a4e" stroke-width="0.9"/></svg>
<svg class="a" style="left:641.0px;top:121px;overflow:hidden;" width="42.0" height="3" viewBox="0 0 42.0 3"><path d="M0 2L1 2L3 0L5 2L7 0L9 2L11 0L13 2L15 0L17 2L19 0L21 2L23 0L25 2L27 0L29 2L31 0L33 2L35 0L37 2L39 0L41 2L43 0L45 2L47 0L49 2L51 0L53 2L55 0L57 2L59 0L61 2L63 0L65 2L67 0L69 2L71 0L73 2L75 0L77 2L79 0L81 2L83 0L85 2L87 0L89 2L91 0L93 2L95 0L97 2L99 0L101 2L103 0L105 2L107 0L109 2L111 0L113 2L115 0L117 2L119 0L121 2L123 0L125 2L127 0L129 2L131 0L133 2L135 0L137 2L139 0L141 2L143 0L145 2L147 0L149 2L151 0L153 2L155 0L157 2L159 0L161 2L163 0L165 2L167 0L169 2L171 0L173 2L175 0L177 2L179 0L181 2L183 0L185 2L187 0L189 2L191 0L193 2L195 0L197 2L199 0L201 2L203 0L205 2L207 0L209 2L211 0L213 2L215 0L217 2L219 0L221 2L223 0L225 2L227 0L229 2L231 0L233 2L235 0L237 2L239 0L241 2L243 0L245 2L247 0L249 2L251 0L253 2L255 0L257 2L259 0L261 2L263 0L265 2L267 0L269 2L271 0L273 2L275 0L277 2L279 0L281 2L283 0L285 2L287 0L289 2L291 0L293 2L295 0L297 2L299 0L301 2L303 0L305 2L307 0L309 2L311 0L313 2L315 0L317 2L319 0L321 2L323 0L325 2L327 0L329 2L331 0L333 2L335 0L337 2L339 0L341 2L343 0L345 2L347 0L349 2L351 0L353 2L355 0L357 2L359 0L361 2L363 0L365 2L367 0L369 2L371 0L373 2L375 0L377 2L379 0L381 2L383 0L385 2L387 0L389 2L391 0L393 2L395 0L397 2L399 0" fill="none" stroke="#5d8a4e" stroke-width="0.9"/></svg>
<svg class="a" style="left:711.0px;top:121px;overflow:hidden;" width="28.0" height="3" viewBox="0 0 28.0 3"><path d="M0 2L1 2L3 0L5 2L7 0L9 2L11 0L13 2L15 0L17 2L19 0L21 2L23 0L25 2L27 0L29 2L31 0L33 2L35 0L37 2L39 0L41 2L43 0L45 2L47 0L49 2L51 0L53 2L55 0L57 2L59 0L61 2L63 0L65 2L67 0L69 2L71 0L73 2L75 0L77 2L79 0L81 2L83 0L85 2L87 0L89 2L91 0L93 2L95 0L97 2L99 0L101 2L103 0L105 2L107 0L109 2L111 0L113 2L115 0L117 2L119 0L121 2L123 0L125 2L127 0L129 2L131 0L133 2L135 0L137 2L139 0L141 2L143 0L145 2L147 0L149 2L151 0L153 2L155 0L157 2L159 0L161 2L163 0L165 2L167 0L169 2L171 0L173 2L175 0L177 2L179 0L181 2L183 0L185 2L187 0L189 2L191 0L193 2L195 0L197 2L199 0L201 2L203 0L205 2L207 0L209 2L211 0L213 2L215 0L217 2L219 0L221 2L223 0L225 2L227 0L229 2L231 0L233 2L235 0L237 2L239 0L241 2L243 0L245 2L247 0L249 2L251 0L253 2L255 0L257 2L259 0L261 2L263 0L265 2L267 0L269 2L271 0L273 2L275 0L277 2L279 0L281 2L283 0L285 2L287 0L289 2L291 0L293 2L295 0L297 2L299 0L301 2L303 0L305 2L307 0L309 2L311 0L313 2L315 0L317 2L319 0L321 2L323 0L325 2L327 0L329 2L331 0L333 2L335 0L337 2L339 0L341 2L343 0L345 2L347 0L349 2L351 0L353 2L355 0L357 2L359 0L361 2L363 0L365 2L367 0L369 2L371 0L373 2L375 0L377 2L379 0L381 2L383 0L385 2L387 0L389 2L391 0L393 2L395 0L397 2L399 0" fill="none" stroke="#5d8a4e" stroke-width="0.9"/></svg>
<svg class="a" style="left:781.0px;top:121px;overflow:hidden;" width="42.0" height="3" viewBox="0 0 42.0 3"><path d="M0 2L1 2L3 0L5 2L7 0L9 2L11 0L13 2L15 0L17 2L19 0L21 2L23 0L25 2L27 0L29 2L31 0L33 2L35 0L37 2L39 0L41 2L43 0L45 2L47 0L49 2L51 0L53 2L55 0L57 2L59 0L61 2L63 0L65 2L67 0L69 2L71 0L73 2L75 0L77 2L79 0L81 2L83 0L85 2L87 0L89 2L91 0L93 2L95 0L97 2L99 0L101 2L103 0L105 2L107 0L109 2L111 0L113 2L115 0L117 2L119 0L121 2L123 0L125 2L127 0L129 2L131 0L133 2L135 0L137 2L139 0L141 2L143 0L145 2L147 0L149 2L151 0L153 2L155 0L157 2L159 0L161 2L163 0L165 2L167 0L169 2L171 0L173 2L175 0L177 2L179 0L181 2L183 0L185 2L187 0L189 2L191 0L193 2L195 0L197 2L199 0L201 2L203 0L205 2L207 0L209 2L211 0L213 2L215 0L217 2L219 0L221 2L223 0L225 2L227 0L229 2L231 0L233 2L235 0L237 2L239 0L241 2L243 0L245 2L247 0L249 2L251 0L253 2L255 0L257 2L259 0L261 2L263 0L265 2L267 0L269 2L271 0L273 2L275 0L277 2L279 0L281 2L283 0L285 2L287 0L289 2L291 0L293 2L295 0L297 2L299 0L301 2L303 0L305 2L307 0L309 2L311 0L313 2L315 0L317 2L319 0L321 2L323 0L325 2L327 0L329 2L331 0L333 2L335 0L337 2L339 0L341 2L343 0L345 2L347 0L349 2L351 0L353 2L355 0L357 2L359 0L361 2L363 0L365 2L367 0L369 2L371 0L373 2L375 0L377 2L379 0L381 2L383 0L385 2L387 0L389 2L391 0L393 2L395 0L397 2L399 0" fill="none" stroke="#5d8a4e" stroke-width="0.9"/></svg>
<svg class="a" style="left:557.0px;top:141px;overflow:hidden;" width="42.0" height="3" viewBox="0 0 42.0 3"><path d="M0 2L1 2L3 0L5 2L7 0L9 2L11 0L13 2L15 0L17 2L19 0L21 2L23 0L25 2L27 0L29 2L31 0L33 2L35 0L37 2L39 0L41 2L43 0L45 2L47 0L49 2L51 0L53 2L55 0L57 2L59 0L61 2L63 0L65 2L67 0L69 2L71 0L73 2L75 0L77 2L79 0L81 2L83 0L85 2L87 0L89 2L91 0L93 2L95 0L97 2L99 0L101 2L103 0L105 2L107 0L109 2L111 0L113 2L115 0L117 2L119 0L121 2L123 0L125 2L127 0L129 2L131 0L133 2L135 0L137 2L139 0L141 2L143 0L145 2L147 0L149 2L151 0L153 2L155 0L157 2L159 0L161 2L163 0L165 2L167 0L169 2L171 0L173 2L175 0L177 2L179 0L181 2L183 0L185 2L187 0L189 2L191 0L193 2L195 0L197 2L199 0L201 2L203 0L205 2L207 0L209 2L211 0L213 2L215 0L217 2L219 0L221 2L223 0L225 2L227 0L229 2L231 0L233 2L235 0L237 2L239 0L241 2L243 0L245 2L247 0L249 2L251 0L253 2L255 0L257 2L259 0L261 2L263 0L265 2L267 0L269 2L271 0L273 2L275 0L277 2L279 0L281 2L283 0L285 2L287 0L289 2L291 0L293 2L295 0L297 2L299 0L301 2L303 0L305 2L307 0L309 2L311 0L313 2L315 0L317 2L319 0L321 2L323 0L325 2L327 0L329 2L331 0L333 2L335 0L337 2L339 0L341 2L343 0L345 2L347 0L349 2L351 0L353 2L355 0L357 2L359 0L361 2L363 0L365 2L367 0L369 2L371 0L373 2L375 0L377 2L379 0L381 2L383 0L385 2L387 0L389 2L391 0L393 2L395 0L397 2L399 0" fill="none" stroke="#5d8a4e" stroke-width="0.9"/></svg>
<svg class="a" style="left:788.0px;top:141px;overflow:hidden;" width="28.0" height="3" viewBox="0 0 28.0 3"><path d="M0 2L1 2L3 0L5 2L7 0L9 2L11 0L13 2L15 0L17 2L19 0L21 2L23 0L25 2L27 0L29 2L31 0L33 2L35 0L37 2L39 0L41 2L43 0L45 2L47 0L49 2L51 0L53 2L55 0L57 2L59 0L61 2L63 0L65 2L67 0L69 2L71 0L73 2L75 0L77 2L79 0L81 2L83 0L85 2L87 0L89 2L91 0L93 2L95 0L97 2L99 0L101 2L103 0L105 2L107 0L109 2L111 0L113 2L115 0L117 2L119 0L121 2L123 0L125 2L127 0L129 2L131 0L133 2L135 0L137 2L139 0L141 2L143 0L145 2L147 0L149 2L151 0L153 2L155 0L157 2L159 0L161 2L163 0L165 2L167 0L169 2L171 0L173 2L175 0L177 2L179 0L181 2L183 0L185 2L187 0L189 2L191 0L193 2L195 0L197 2L199 0L201 2L203 0L205 2L207 0L209 2L211 0L213 2L215 0L217 2L219 0L221 2L223 0L225 2L227 0L229 2L231 0L233 2L235 0L237 2L239 0L241 2L243 0L245 2L247 0L249 2L251 0L253 2L255 0L257 2L259 0L261 2L263 0L265 2L267 0L269 2L271 0L273 2L275 0L277 2L279 0L281 2L283 0L285 2L287 0L289 2L291 0L293 2L295 0L297 2L299 0L301 2L303 0L305 2L307 0L309 2L311 0L313 2L315 0L317 2L319 0L321 2L323 0L325 2L327 0L329 2L331 0L333 2L335 0L337 2L339 0L341 2L343 0L345 2L347 0L349 2L351 0L353 2L355 0L357 2L359 0L361 2L363 0L365 2L367 0L369 2L371 0L373 2L375 0L377 2L379 0L381 2L383 0L385 2L387 0L389 2L391 0L393 2L395 0L397 2L399 0" fill="none" stroke="#5d8a4e" stroke-width="0.9"/></svg>
<svg class="a" style="left:487.0px;top:241px;overflow:hidden;" width="42.0" height="3" viewBox="0 0 42.0 3"><path d="M0 2L1 2L3 0L5 2L7 0L9 2L11 0L13 2L15 0L17 2L19 0L21 2L23 0L25 2L27 0L29 2L31 0L33 2L35 0L37 2L39 0L41 2L43 0L45 2L47 0L49 2L51 0L53 2L55 0L57 2L59 0L61 2L63 0L65 2L67 0L69 2L71 0L73 2L75 0L77 2L79 0L81 2L83 0L85 2L87 0L89 2L91 0L93 2L95 0L97 2L99 0L101 2L103 0L105 2L107 0L109 2L111 0L113 2L115 0L117 2L119 0L121 2L123 0L125 2L127 0L129 2L131 0L133 2L135 0L137 2L139 0L141 2L143 0L145 2L147 0L149 2L151 0L153 2L155 0L157 2L159 0L161 2L163 0L165 2L167 0L169 2L171 0L173 2L175 0L177 2L179 0L181 2L183 0L185 2L187 0L189 2L191 0L193 2L195 0L197 2L199 0L201 2L203 0L205 2L207 0L209 2L211 0L213 2L215 0L217 2L219 0L221 2L223 0L225 2L227 0L229 2L231 0L233 2L235 0L237 2L239 0L241 2L243 0L245 2L247 0L249 2L251 0L253 2L255 0L257 2L259 0L261 2L263 0L265 2L267 0L269 2L271 0L273 2L275 0L277 2L279 0L281 2L283 0L285 2L287 0L289 2L291 0L293 2L295 0L297 2L299 0L301 2L303 0L305 2L307 0L309 2L311 0L313 2L315 0L317 2L319 0L321 2L323 0L325 2L327 0L329 2L331 0L333 2L335 0L337 2L339 0L341 2L343 0L345 2L347 0L349 2L351 0L353 2L355 0L357 2L359 0L361 2L363 0L365 2L367 0L369 2L371 0L373 2L375 0L377 2L379 0L381 2L383 0L385 2L387 0L389 2L391 0L393 2L395 0L397 2L399 0" fill="none" stroke="#5d8a4e" stroke-width="0.9"/></svg>
<svg class="a" style="left:606.0px;top:281px;overflow:hidden;" width="49.0" height="3" viewBox="0 0 49.0 3"><path d="M0 2L1 2L3 0L5 2L7 0L9 2L11 0L13 2L15 0L17 2L19 0L21 2L23 0L25 2L27 0L29 2L31 0L33 2L35 0L37 2L39 0L41 2L43 0L45 2L47 0L49 2L51 0L53 2L55 0L57 2L59 0L61 2L63 0L65 2L67 0L69 2L71 0L73 2L75 0L77 2L79 0L81 2L83 0L85 2L87 0L89 2L91 0L93 2L95 0L97 2L99 0L101 2L103 0L105 2L107 0L109 2L111 0L113 2L115 0L117 2L119 0L121 2L123 0L125 2L127 0L129 2L131 0L133 2L135 0L137 2L139 0L141 2L143 0L145 2L147 0L149 2L151 0L153 2L155 0L157 2L159 0L161 2L163 0L165 2L167 0L169 2L171 0L173 2L175 0L177 2L179 0L181 2L183 0L185 2L187 0L189 2L191 0L193 2L195 0L197 2L199 0L201 2L203 0L205 2L207 0L209 2L211 0L213 2L215 0L217 2L219 0L221 2L223 0L225 2L227 0L229 2L231 0L233 2L235 0L237 2L239 0L241 2L243 0L245 2L247 0L249 2L251 0L253 2L255 0L257 2L259 0L261 2L263 0L265 2L267 0L269 2L271 0L273 2L275 0L277 2L279 0L281 2L283 0L285 2L287 0L289 2L291 0L293 2L295 0L297 2L299 0L301 2L303 0L305 2L307 0L309 2L311 0L313 2L315 0L317 2L319 0L321 2L323 0L325 2L327 0L329 2L331 0L333 2L335 0L337 2L339 0L341 2L343 0L345 2L347 0L349 2L351 0L353 2L355 0L357 2L359 0L361 2L363 0L365 2L367 0L369 2L371 0L373 2L375 0L377 2L379 0L381 2L383 0L385 2L387 0L389 2L391 0L393 2L395 0L397 2L399 0" fill="none" stroke="#5d8a4e" stroke-width="0.9"/></svg>
<svg class="a" style="left:459.0px;top:301px;overflow:hidden;" width="42.0" height="3" viewBox="0 0 42.0 3"><path d="M0 2L1 2L3 0L5 2L7 0L9 2L11 0L13 2L15 0L17 2L19 0L21 2L23 0L25 2L27 0L29 2L31 0L33 2L35 0L37 2L39 0L41 2L43 0L45 2L47 0L49 2L51 0L53 2L55 0L57 2L59 0L61 2L63 0L65 2L67 0L69 2L71 0L73 2L75 0L77 2L79 0L81 2L83 0L85 2L87 0L89 2L91 0L93 2L95 0L97 2L99 0L101 2L103 0L105 2L107 0L109 2L111 0L113 2L115 0L117 2L119 0L121 2L123 0L125 2L127 0L129 2L131 0L133 2L135 0L137 2L139 0L141 2L143 0L145 2L147 0L149 2L151 0L153 2L155 0L157 2L159 0L161 2L163 0L165 2L167 0L169 2L171 0L173 2L175 0L177 2L179 0L181 2L183 0L185 2L187 0L189 2L191 0L193 2L195 0L197 2L199 0L201 2L203 0L205 2L207 0L209 2L211 0L213 2L215 0L217 2L219 0L221 2L223 0L225 2L227 0L229 2L231 0L233 2L235 0L237 2L239 0L241 2L243 0L245 2L247 0L249 2L251 0L253 2L255 0L257 2L259 0L261 2L263 0L265 2L267 0L269 2L271 0L273 2L275 0L277 2L279 0L281 2L283 0L285 2L287 0L289 2L291 0L293 2L295 0L297 2L299 0L301 2L303 0L305 2L307 0L309 2L311 0L313 2L315 0L317 2L319 0L321 2L323 0L325 2L327 0L329 2L331 0L333 2L335 0L337 2L339 0L341 2L343 0L345 2L347 0L349 2L351 0L353 2L355 0L357 2L359 0L361 2L363 0L365 2L367 0L369 2L371 0L373 2L375 0L377 2L379 0L381 2L383 0L385 2L387 0L389 2L391 0L393 2L395 0L397 2L399 0" fill="none" stroke="#5d8a4e" stroke-width="0.9"/></svg>
<svg class="a" style="left:669.0px;top:301px;overflow:hidden;" width="35.0" height="3" viewBox="0 0 35.0 3"><path d="M0 2L1 2L3 0L5 2L7 0L9 2L11 0L13 2L15 0L17 2L19 0L21 2L23 0L25 2L27 0L29 2L31 0L33 2L35 0L37 2L39 0L41 2L43 0L45 2L47 0L49 2L51 0L53 2L55 0L57 2L59 0L61 2L63 0L65 2L67 0L69 2L71 0L73 2L75 0L77 2L79 0L81 2L83 0L85 2L87 0L89 2L91 0L93 2L95 0L97 2L99 0L101 2L103 0L105 2L107 0L109 2L111 0L113 2L115 0L117 2L119 0L121 2L123 0L125 2L127 0L129 2L131 0L133 2L135 0L137 2L139 0L141 2L143 0L145 2L147 0L149 2L151 0L153 2L155 0L157 2L159 0L161 2L163 0L165 2L167 0L169 2L171 0L173 2L175 0L177 2L179 0L181 2L183 0L185 2L187 0L189 2L191 0L193 2L195 0L197 2L199 0L201 2L203 0L205 2L207 0L209 2L211 0L213 2L215 0L217 2L219 0L221 2L223 0L225 2L227 0L229 2L231 0L233 2L235 0L237 2L239 0L241 2L243 0L245 2L247 0L249 2L251 0L253 2L255 0L257 2L259 0L261 2L263 0L265 2L267 0L269 2L271 0L273 2L275 0L277 2L279 0L281 2L283 0L285 2L287 0L289 2L291 0L293 2L295 0L297 2L299 0L301 2L303 0L305 2L307 0L309 2L311 0L313 2L315 0L317 2L319 0L321 2L323 0L325 2L327 0L329 2L331 0L333 2L335 0L337 2L339 0L341 2L343 0L345 2L347 0L349 2L351 0L353 2L355 0L357 2L359 0L361 2L363 0L365 2L367 0L369 2L371 0L373 2L375 0L377 2L379 0L381 2L383 0L385 2L387 0L389 2L391 0L393 2L395 0L397 2L399 0" fill="none" stroke="#5d8a4e" stroke-width="0.9"/></svg>
<svg class="a" style="left:830.0px;top:301px;overflow:hidden;" width="42.0" height="3" viewBox="0 0 42.0 3"><path d="M0 2L1 2L3 0L5 2L7 0L9 2L11 0L13 2L15 0L17 2L19 0L21 2L23 0L25 2L27 0L29 2L31 0L33 2L35 0L37 2L39 0L41 2L43 0L45 2L47 0L49 2L51 0L53 2L55 0L57 2L59 0L61 2L63 0L65 2L67 0L69 2L71 0L73 2L75 0L77 2L79 0L81 2L83 0L85 2L87 0L89 2L91 0L93 2L95 0L97 2L99 0L101 2L103 0L105 2L107 0L109 2L111 0L113 2L115 0L117 2L119 0L121 2L123 0L125 2L127 0L129 2L131 0L133 2L135 0L137 2L139 0L141 2L143 0L145 2L147 0L149 2L151 0L153 2L155 0L157 2L159 0L161 2L163 0L165 2L167 0L169 2L171 0L173 2L175 0L177 2L179 0L181 2L183 0L185 2L187 0L189 2L191 0L193 2L195 0L197 2L199 0L201 2L203 0L205 2L207 0L209 2L211 0L213 2L215 0L217 2L219 0L221 2L223 0L225 2L227 0L229 2L231 0L233 2L235 0L237 2L239 0L241 2L243 0L245 2L247 0L249 2L251 0L253 2L255 0L257 2L259 0L261 2L263 0L265 2L267 0L269 2L271 0L273 2L275 0L277 2L279 0L281 2L283 0L285 2L287 0L289 2L291 0L293 2L295 0L297 2L299 0L301 2L303 0L305 2L307 0L309 2L311 0L313 2L315 0L317 2L319 0L321 2L323 0L325 2L327 0L329 2L331 0L333 2L335 0L337 2L339 0L341 2L343 0L345 2L347 0L349 2L351 0L353 2L355 0L357 2L359 0L361 2L363 0L365 2L367 0L369 2L371 0L373 2L375 0L377 2L379 0L381 2L383 0L385 2L387 0L389 2L391 0L393 2L395 0L397 2L399 0" fill="none" stroke="#5d8a4e" stroke-width="0.9"/></svg>
<svg class="a" style="left:1047.0px;top:301px;overflow:hidden;" width="28.0" height="3" viewBox="0 0 28.0 3"><path d="M0 2L1 2L3 0L5 2L7 0L9 2L11 0L13 2L15 0L17 2L19 0L21 2L23 0L25 2L27 0L29 2L31 0L33 2L35 0L37 2L39 0L41 2L43 0L45 2L47 0L49 2L51 0L53 2L55 0L57 2L59 0L61 2L63 0L65 2L67 0L69 2L71 0L73 2L75 0L77 2L79 0L81 2L83 0L85 2L87 0L89 2L91 0L93 2L95 0L97 2L99 0L101 2L103 0L105 2L107 0L109 2L111 0L113 2L115 0L117 2L119 0L121 2L123 0L125 2L127 0L129 2L131 0L133 2L135 0L137 2L139 0L141 2L143 0L145 2L147 0L149 2L151 0L153 2L155 0L157 2L159 0L161 2L163 0L165 2L167 0L169 2L171 0L173 2L175 0L177 2L179 0L181 2L183 0L185 2L187 0L189 2L191 0L193 2L195 0L197 2L199 0L201 2L203 0L205 2L207 0L209 2L211 0L213 2L215 0L217 2L219 0L221 2L223 0L225 2L227 0L229 2L231 0L233 2L235 0L237 2L239 0L241 2L243 0L245 2L247 0L249 2L251 0L253 2L255 0L257 2L259 0L261 2L263 0L265 2L267 0L269 2L271 0L273 2L275 0L277 2L279 0L281 2L283 0L285 2L287 0L289 2L291 0L293 2L295 0L297 2L299 0L301 2L303 0L305 2L307 0L309 2L311 0L313 2L315 0L317 2L319 0L321 2L323 0L325 2L327 0L329 2L331 0L333 2L335 0L337 2L339 0L341 2L343 0L345 2L347 0L349 2L351 0L353 2L355 0L357 2L359 0L361 2L363 0L365 2L367 0L369 2L371 0L373 2L375 0L377 2L379 0L381 2L383 0L385 2L387 0L389 2L391 0L393 2L395 0L397 2L399 0" fill="none" stroke="#5d8a4e" stroke-width="0.9"/></svg>
<div class="a" style="left:22px;top:504px;width:1344px;height:27px;background:#3c3f41;"></div>
<div class="a" style="left:22px;top:504px;width:1344px;height:1px;background:#2f3133;"></div>
<div class="a t s " style="left:28.3px;top:498.84px;font:12px/40px 'Liberation Sans',sans-serif;color:#bbbbbb;letter-spacing:-0.607px;">Run:</div>
<svg class="a" style="left:71.8px;top:511px;" width="16" height="16" viewBox="0 0 16 16"><g transform="scale(1.0)"><path d="M7.4 0.5C4.2 0.5 4.4 1.9 4.4 1.9V3.4h3.1v.5H3.2S1 3.6 1 7.2s1.9 3.4 1.9 3.4h1.2V8.9s-.1-1.9 1.9-1.9h3.1s1.8 0 1.8-1.8V2.3S11.2 0.5 7.4 0.5z" fill="#3e7ab5"/><path d="M7.6 14.5c3.2 0 3-1.4 3-1.4v-1.5H7.5v-.5h4.3S14 11.4 14 7.8s-1.9-3.4-1.9-3.4h-1.2v1.7s.1 1.9-1.9 1.9H5.9S4.1 8 4.1 9.8v2.9s-.3 1.8 3.5 1.8z" fill="#f1c232"/><circle cx="13" cy="13" r="2.2" fill="#1ad31a"/></g></svg>
<div class="a t s " style="left:91.6px;top:498.84px;font:12px/40px 'Liberation Sans',sans-serif;color:#bbbbbb;letter-spacing:0.403px;">odoo-bin</div>
<svg class="a" style="left:148px;top:515px;" width="9" height="9" viewBox="0 0 9 9"><path d="M0.5 0.5L8.5 8.5M8.5 0.5L0.5 8.5" stroke="#5f6366" stroke-width="1.1"/></svg>
<div class="a" style="left:59px;top:529px;width:108px;height:3px;background:#747a80;"></div>
<svg class="a" style="left:1321.5px;top:511px;" width="14" height="14" viewBox="0 0 14 14"><g transform="translate(7 7)"><path d="M-1.3-6.5h2.6l.5 1.9 1.7 1 1.9-.6 1.3 2.2-1.4 1.4v2l1.4 1.4-1.3 2.2-1.9-.6-1.7 1-.5 1.9h-2.6l-.5-1.9-1.7-1-1.9.6-1.3-2.2 1.4-1.4v-2l-1.4-1.4 1.3-2.2 1.9.6 1.7-1z" fill="#afb1b3"/><circle r="2" fill="#3c3f41"/></g></svg>
<div class="a" style="left:1348px;top:517px;width:12px;height:2px;background:#afb1b3;"></div>
<div class="a" style="left:22px;top:531px;width:1344px;height:1px;background:#323232;"></div>
<div class="a" style="left:22px;top:532px;width:28px;height:153px;background:#3c3f41;"></div>
<div class="a" style="left:50px;top:532px;width:1px;height:153px;background:#323232;"></div>
<div class="a" style="left:51px;top:532px;width:28px;height:153px;background:#3c3f41;"></div>
<div class="a" style="left:79px;top:532px;width:1px;height:153px;background:#323232;"></div>
<div class="a" style="left:80px;top:532px;width:1286px;height:153px;background:#2b2b2b;"></div>
<svg class="a" style="left:29.5px;top:538.5px;" width="16" height="16" viewBox="0 0 16 16"><path d="M10.5 3.2A5.6 5.6 0 1 0 8.6 13.6" fill="none" stroke="#499c54" stroke-width="2"/><path d="M9 0l5 3.6-5 3.4z" fill="#499c54"/><rect x="7.6" y="9.5" width="5" height="5" fill="#afb1b3"/></svg>
<div class="a" style="left:31px;top:567px;width:10px;height:10px;background:#c75450;"></div>
<div class="a" style="left:26px;top:588px;width:20px;height:1px;background:#515355;"></div>
<svg class="a" style="left:29.5px;top:599.5px;" width="13" height="11" viewBox="0 0 13 11"><g fill="#afb1b3"><rect x="0" y="0" width="6" height="5"/><rect x="7" y="0" width="5.5" height="5"/><rect x="0" y="6.3" width="12.5" height="4"/></g></svg>
<div class="a" style="left:26px;top:621px;width:20px;height:1px;background:#515355;"></div>
<svg class="a" style="left:29px;top:630.5px;" width="15" height="15" viewBox="0 0 15 15"><path d="M1 14L5.5 9.5" stroke="#afb1b3" stroke-width="1.4"/><path d="M4 6.5L9.5 1.5L13.5 5.5L8.5 11z" fill="#afb1b3"/><path d="M3 5.5L10 12.5" stroke="#afb1b3" stroke-width="1.6"/></svg>
<svg class="a" style="left:59px;top:540px;" width="12" height="14" viewBox="0 0 12 14"><path d="M6 1v12M1.5 5.5L6 1l4.5 4.5" fill="none" stroke="#5f6163" stroke-width="1.3"/></svg>
<svg class="a" style="left:59px;top:566px;" width="12" height="14" viewBox="0 0 12 14"><path d="M6 1v12M1.5 8.5L6 13l4.5-4.5" fill="none" stroke="#5f6163" stroke-width="1.3"/></svg>
<svg class="a" style="left:58px;top:592px;" width="15" height="15" viewBox="0 0 15 15"><path d="M1 1.5h12M1 5.5h10a2.5 2.5 0 0 1 0 5H7" fill="none" stroke="#afb1b3" stroke-width="1.4"/><path d="M8.5 8L5.5 10.5L8.5 13z" fill="#afb1b3"/><rect x="1" y="9.5" width="3" height="1.4" fill="#afb1b3"/></svg>
<div class="a" style="left:54px;top:614px;width:22px;height:22px;background:#4c5052;border-radius:3px;"></div>
<svg class="a" style="left:58px;top:617px;" width="15" height="15" viewBox="0 0 15 15"><path d="M1 2h5M1 6h5M1 12.5h13M10 1v8M7 6l3 3.5L13 6" fill="none" stroke="#afb1b3" stroke-width="1.4"/><path d="M1 10h13" stroke="#afb1b3" stroke-width="1.4"/></svg>
<svg class="a" style="left:58px;top:644px;" width="15" height="15" viewBox="0 0 15 15"><path d="M3.5 0.5h8V4h-8z" fill="#afb1b3"/><path d="M0.5 4.5h14V10.5H12V8H3v2.5H0.5z" fill="#afb1b3"/><path d="M3.5 8.5h8v5.5h-8z" fill="none" stroke="#afb1b3" stroke-width="1.2"/></svg>
<svg class="a" style="left:61.5px;top:672.5px;" width="9" height="7" viewBox="0 0 9 7"><path d="M0.7 0.7L3.5 3.5L0.7 6.3M4.7 0.7L7.5 3.5L4.7 6.3" fill="none" stroke="#afb1b3" stroke-width="1.1"/></svg>
<div class="a t  " style="left:91.6px;top:521.75px;font:12.2px/40px 'Liberation Mono',monospace;color:#ff6b68;letter-spacing:-0.3210px;">2023-03-21 14:01:08,283 4044 INFO bucanero_crm werkzeug: 127.0.0.1 - - [21/Mar/2023 14:01:08] &quot;POST /web/dataset/call_kw/crm.lead/web_read_group HTTP/1.1&quot; 200 - 2 0.008 0.005</div>
<div class="a t  " style="left:91.6px;top:541.75px;font:12.2px/40px 'Liberation Mono',monospace;color:#ff6b68;letter-spacing:-0.3210px;">2023-03-21 14:01:08,292 4044 INFO bucanero_crm werkzeug: 127.0.0.1 - - [21/Mar/2023 14:01:08] &quot;POST /web/dataset/call_kw/crm.lead/read_progress_bar HTTP/1.1&quot; 200 - 8 0.006 0.015</div>
<div class="a t  " style="left:91.6px;top:561.75px;font:12.2px/40px 'Liberation Mono',monospace;color:#ff6b68;letter-spacing:-0.3210px;">2023-03-21 14:01:08,320 4044 INFO bucanero_crm werkzeug: 127.0.0.1 - - [21/Mar/2023 14:01:08] &quot;POST /web/dataset/call_kw/crm.lead/web_search_read HTTP/1.1&quot; 200 - 11 0.007 0.024</div>
<div class="a t  " style="left:91.6px;top:581.75px;font:12.2px/40px 'Liberation Mono',monospace;color:#ff6b68;letter-spacing:-0.3210px;">2023-03-21 14:01:08,338 4044 INFO bucanero_crm werkzeug: 127.0.0.1 - - [21/Mar/2023 14:01:08] &quot;POST /web/dataset/call_kw/crm.lead/web_search_read HTTP/1.1&quot; 200 - 16 0.024 0.022</div>
<div class="a t  " style="left:91.6px;top:601.75px;font:12.2px/40px 'Liberation Mono',monospace;color:#ff6b68;letter-spacing:-0.3210px;">2023-03-21 14:01:08,363 4044 INFO bucanero_crm werkzeug: 127.0.0.1 - - [21/Mar/2023 14:01:08] &quot;POST /web/dataset/call_kw/crm.tag/read HTTP/1.1&quot; 200 - 2 0.000 0.004</div>
<div class="a t  " style="left:91.6px;top:621.75px;font:12.2px/40px 'Liberation Mono',monospace;color:#ff6b68;letter-spacing:-0.3210px;">2023-03-21 14:04:43,258 4044 INFO bucanero_crm werkzeug: 127.0.0.1 - - [21/Mar/2023 14:04:43] &quot;GET /websocket HTTP/1.1&quot; 101 - 1 0.001 0.007</div>
<div class="a" style="left:92px;top:676px;width:873px;height:8px;background:#4e4e4e;"></div>
<div class="a" style="left:1358px;top:658px;width:8px;height:26px;background:#595b5d;"></div>
<div class="a" style="left:0px;top:685px;width:1366px;height:22px;background:#3c3f41;"></div>
<div class="a" style="left:22px;top:685px;width:1344px;height:1px;background:#323232;"></div>
<div class="a" style="left:21px;top:686px;width:70px;height:21px;background:#2e3032;"></div>
<svg class="a" style="left:33px;top:692px;" width="10" height="13" viewBox="0 0 10 13"><path d="M0 0L8.5 5.5L0 11z" fill="#afb1b3"/><circle cx="8" cy="10.5" r="2" fill="#1ad31a"/></svg>
<div class="a t s " style="left:47.9px;top:678.05px;font:11.4px/40px 'Liberation Sans',sans-serif;color:#e8e8e8;letter-spacing:-0.195px;">4: Run</div>
<div class="a" style="left:47.9px;top:703px;width:6.2px;height:1px;background:#e8e8e8;"></div>
<svg class="a" style="left:102.5px;top:691px;" width="12" height="12" viewBox="0 0 12 12"><g fill="#afb1b3"><rect x="2" y="2.5" width="8" height="9.5" rx="3"/><circle cx="6" cy="2.8" r="2.2"/><path d="M0 5h2.5M9.5 5H12M0 8.5h2.5M9.5 8.5H12" stroke="#afb1b3" stroke-width="1.2"/></g></svg>
<div class="a t s " style="left:119.5px;top:678.05px;font:11.4px/40px 'Liberation Sans',sans-serif;color:#bbbbbb;letter-spacing:-0.041px;">5: Debug</div>
<div class="a" style="left:119.5px;top:703px;width:6.3px;height:1px;background:#bbbbbb;"></div>
<svg class="a" style="left:189px;top:691px;" width="11" height="11" viewBox="0 0 11 11"><g fill="#afb1b3"><rect x="0" y="1" width="2" height="2"/><rect x="3" y="1" width="8" height="2"/><rect x="0" y="4.5" width="2" height="2"/><rect x="3" y="4.5" width="8" height="2"/><rect x="0" y="8" width="2" height="2"/><rect x="3" y="8" width="8" height="2"/></g></svg>
<div class="a t s " style="left:203.9px;top:678.05px;font:11.4px/40px 'Liberation Sans',sans-serif;color:#bbbbbb;letter-spacing:-0.267px;">6: TODO</div>
<div class="a" style="left:203.9px;top:703px;width:6.1px;height:1px;background:#bbbbbb;"></div>
<svg class="a" style="left:269.5px;top:691px;" width="12" height="11" viewBox="0 0 12 11"><rect x="0" y="0" width="12" height="11" fill="#afb1b3"/><path d="M2.5 2.5L5 5L2.5 7.5" fill="none" stroke="#3c3f41" stroke-width="1.2"/><rect x="6" y="7.5" width="4" height="1.3" fill="#3c3f41"/></svg>
<div class="a t s " style="left:286.4px;top:678.05px;font:11.4px/40px 'Liberation Sans',sans-serif;color:#bbbbbb;letter-spacing:0.001px;">Terminal</div>
<svg class="a" style="left:353px;top:690px;" width="12" height="13" viewBox="0 0 12 13"><g transform="scale(0.8)"><path d="M7.4 0.5C4.2 0.5 4.4 1.9 4.4 1.9V3.4h3.1v.5H3.2S1 3.6 1 7.2s1.9 3.4 1.9 3.4h1.2V8.9s-.1-1.9 1.9-1.9h3.1s1.8 0 1.8-1.8V2.3S11.2 0.5 7.4 0.5z" fill="#afb1b3"/><path d="M7.6 14.5c3.2 0 3-1.4 3-1.4v-1.5H7.5v-.5h4.3S14 11.4 14 7.8s-1.9-3.4-1.9-3.4h-1.2v1.7s.1 1.9-1.9 1.9H5.9S4.1 8 4.1 9.8v2.9s-.3 1.8 3.5 1.8z" fill="#afb1b3"/></g></svg>
<div class="a t s " style="left:369.3px;top:678.05px;font:11.4px/40px 'Liberation Sans',sans-serif;color:#bbbbbb;letter-spacing:-0.022px;">Python Console</div>
<svg class="a" style="left:1267.5px;top:691px;" width="14" height="13" viewBox="0 0 14 13"><path d="M6.5 12H13V6.5A6 6 0 1 0 6.5 12z" fill="none" stroke="#afb1b3" stroke-width="1.3"/></svg>
<div class="a t s " style="left:1285.5px;top:678.19px;font:11px/40px 'Liberation Sans',sans-serif;color:#bbbbbb;letter-spacing:-0.007px;">Event Log</div>
<div class="a" style="left:0px;top:707px;width:1366px;height:1px;background:#323232;"></div>
<div class="a" style="left:0px;top:708px;width:1366px;height:20px;background:#3c3f41;"></div>
<svg class="a" style="left:5.5px;top:711.5px;" width="13" height="13" viewBox="0 0 13 13"><path d="M3.5 0.5h9v9h-9z" fill="none" stroke="#afb1b3" stroke-width="1"/><path d="M0.5 3.5v9h9" fill="none" stroke="#afb1b3" stroke-width="1"/></svg>
<div class="a t s " style="left:1008.5px;top:697.79px;font:11px/40px 'Liberation Sans',sans-serif;color:#bbbbbb;letter-spacing:-0.298px;">13:1</div>
<div class="a t s " style="left:1041.6px;top:697.79px;font:11px/40px 'Liberation Sans',sans-serif;color:#bbbbbb;letter-spacing:-0.803px;">CRLF</div>
<div class="a t s " style="left:1080.0px;top:697.79px;font:11px/40px 'Liberation Sans',sans-serif;color:#bbbbbb;letter-spacing:0.079px;">UTF-8</div>
<div class="a t s " style="left:1122.8px;top:697.79px;font:11px/40px 'Liberation Sans',sans-serif;color:#bbbbbb;letter-spacing:0.021px;">4 spaces</div>
<div class="a t s " style="left:1179.0px;top:697.79px;font:11px/40px 'Liberation Sans',sans-serif;color:#bbbbbb;letter-spacing:0.403px;">Python 3.8 (Odoo_Conf)</div>
<svg class="a" style="left:1318px;top:711px;" width="12" height="13" viewBox="0 0 12 13"><path d="M5.5 6V3.5a2.5 2.5 0 0 0-5 0" fill="none" stroke="#afb1b3" stroke-width="1.3"/><rect x="3" y="6" width="8.5" height="6.5" fill="#afb1b3"/></svg>
<svg class="a" style="left:1342.5px;top:710.5px;" width="14" height="14" viewBox="0 0 14 14"><g fill="#afb1b3"><path d="M3 1h8l1 4H2z"/><rect x="0" y="5" width="14" height="1.5"/><circle cx="4.5" cy="8.5" r="1.8"/><circle cx="9.5" cy="8.5" r="1.8"/><path d="M2 14c0-3 2-4 5-4s5 1 5 4z"/></g></svg>
<div class="a" style="left:0px;top:728px;width:1366px;height:40px;background:linear-gradient(90deg,#40372b 0px,#3d352b 48px,#30302a 340px,#32322a 390px,#3a3028 430px,#3d332b 540px,#3c3a30 640px,#433a33 760px,#463c36 840px,#433833 950px,#3a3830 1000px,#32322a 1050px,#2f3026 1100px,#3c342e 1200px,#443833 1290px,#4a3c37 1366px);"></div>
<svg class="a" style="left:15.5px;top:739.5px;" width="17" height="17" viewBox="0 0 17 17"><path d="M0 2.3L6.8 1.4V7.9H0zM7.7 1.3L16.5 0V7.9H7.7zM0 8.8H6.8V15.4L0 14.5zM7.7 8.8H16.5V16.8L7.7 15.6z" fill="#fff"/></svg>
<div class="a" style="left:48px;top:728px;width:288px;height:40px;background:#f2f2f2;"></div>
<div class="a" style="left:48px;top:767px;width:288px;height:1px;background:#bcbcbc;"></div>
<svg class="a" style="left:59.5px;top:739.5px;" width="17" height="17" viewBox="0 0 17 17"><circle cx="10.6" cy="5.8" r="5" fill="none" stroke="#1a1a1a" stroke-width="1.2"/><path d="M7.2 9.4L0.5 16.3" stroke="#1a1a1a" stroke-width="1.3"/></svg>
<div class="a t  " style="left:88.7px;top:728.40px;font:15px/40px 'Liberation Sans',sans-serif;color:#1f1f1f;letter-spacing:-0.130px;">Buscar</div>
<svg class="a" style="left:350.5px;top:739.5px;" width="18" height="16" viewBox="0 0 18 16"><path d="M0.6 0v15.5M0.6 3.5h11.5v8.5H0.6M12.1 0v3.5M12.1 12v3.5M15.5 0v2.5M15.5 5v6M15.5 13v2.5" fill="none" stroke="#fff" stroke-width="1.1"/><rect x="2" y="0" width="10" height="1.1" fill="#fff"/><rect x="2" y="14.4" width="10" height="1.1" fill="#fff"/></svg>
<svg class="a" style="left:398px;top:735.5px;" width="26" height="25" viewBox="0 0 26 25"><defs><linearGradient id="eg1" x1="0" y1="0" x2="1" y2="0.6"><stop offset="0" stop-color="#2fb0ea"/><stop offset="0.55" stop-color="#33c3d6"/><stop offset="1" stop-color="#6fd26a"/></linearGradient><linearGradient id="eg2" x1="0" y1="0" x2="0.3" y2="1"><stop offset="0" stop-color="#1377d3"/><stop offset="1" stop-color="#0b4a96"/></linearGradient></defs><path d="M12.5 0.5C19.5 0.5 24.8 5.5 24.8 11.5c0 3.6-2.8 5.6-6 5.6-2.6 0-4.6-1-4.6-2.4 0-.6.6-.8.6-2 0-2.6-2.6-4.6-5.6-4.6C4.5 8.1 1.5 11 .6 14.5 1 6.5 6 0.5 12.5 0.5z" fill="url(#eg1)"/><path d="M.6 14.5C1.5 11 4.5 8.1 8.8 8.1c3 0 5.6 2 5.6 4.6 0 1.2-.6 1.4-.6 2 0 1.4 2 2.4 4.6 2.4 3.2 0 6-2 6-5.6 0 6.8-5.3 12.8-12.3 12.8C5.8 24.3.6 20 .6 14.5z" fill="url(#eg2)"/><path d="M9 14c0 4 3.5 7 8 7.3" fill="none" stroke="#1d8be0" stroke-width="2.2"/></svg>
<svg class="a" style="left:449px;top:738.5px;" width="22" height="19" viewBox="0 0 22 19"><path d="M0 0.5h8.5l1.5 2H21.5V17.5H0z" fill="#e9a82c"/><rect x="0" y="3" width="21.5" height="14.5" fill="#f9d160"/><path d="M4 10h13.5V18.5H13.5V14h-5.5V18.5H4z" fill="#3c9ae4"/></svg>
<svg class="a" style="left:496.5px;top:735.5px;" width="24" height="25" viewBox="0 0 24 25"><path d="M7.5 7V4.5a4.5 4.5 0 0 1 9 0V7M9 7V5a3 3 0 0 1 6 0V7" fill="none" stroke="#fff" stroke-width="1.1"/><rect x="0" y="6" width="23.5" height="17.5" rx="2" fill="#fff"/><rect x="6" y="9" width="5" height="5" fill="#f25022"/><rect x="12" y="9" width="5" height="5" fill="#7fba00"/><rect x="6" y="15" width="5" height="5" fill="#00a4ef"/><rect x="12" y="15" width="5" height="5" fill="#ffb900"/></svg>
<svg class="a" style="left:545.5px;top:737.5px;" width="25" height="20" viewBox="0 0 25 20"><path d="M0 6.5L12.5 0L25 6.5V19.7H0z" fill="#fff"/><path d="M1.2 6.9H23.6L14.2 10.8L18.8 15.8L12 11.2z" fill="#3b312b"/></svg>
<svg class="a" style="left:595px;top:735.5px;" width="24" height="25" viewBox="0 0 24 25"><defs><radialGradient id="ff1" cx="0.7" cy="0.2" r="0.9"><stop offset="0" stop-color="#fff44f"/><stop offset="0.35" stop-color="#ff9a2e"/><stop offset="0.7" stop-color="#ff3f4f"/><stop offset="1" stop-color="#e31587"/></radialGradient></defs><path d="M12 24.5C5.5 24.5 0.5 19.5 0.5 13c0-3 1-5.5 2.5-7.5 0 1.5.5 2.5 1.5 3.5C5 5.5 7 3.5 9.5 3c-1 1.5-1 3 0 4 1.5-4 5-6 8-7-1 1.5-1 3 0 4.5 3.5 2 6 5.5 6 9.5 0 6-5 10.5-11.5 10.5z" fill="url(#ff1)"/><circle cx="12" cy="14" r="5.6" fill="#7542e5"/><path d="M6.5 12c2-3 6-4 9-2-2 .2-3 1-3 2.5-2-.5-4 0-6-.5z" fill="#ff8a2a"/></svg>
<svg class="a" style="left:646.5px;top:736.5px;" width="18" height="23" viewBox="0 0 18 23"><path d="M0 4.5L11.5 0L17.5 2V21L11.5 23L0 18.5zM4 6.5V16.5L11.5 19.5V3z" fill="#eb3c00" fill-rule="evenodd"/><path d="M0 4.5L11.5 0V23L0 18.5z" fill="#eb3c00"/><path d="M3.5 6.3V16.7L11.5 19V4z" fill="#3c3a30"/></svg>
<svg class="a" style="left:693.5px;top:735.5px;" width="23" height="23" viewBox="0 0 23 23"><circle cx="11.5" cy="11.5" r="11.2" fill="#2aa3de"/><path d="M4.5 11.2L17.5 6L15.5 17L11 13.5L9 15.5L9.2 12.5L15 8L7.5 12.2z" fill="#fff"/></svg>
<div class="a" style="left:702.5px;top:751px;width:17px;height:10px;background:#e2443f;border-radius:2px;"></div>
<div class="a t  " style="left:703.5px;top:736.55px;font:8.5px/40px 'Liberation Sans',sans-serif;color:#ffffff;letter-spacing:0.268px;">..76</div>
<div class="a" style="left:730px;top:728px;width:48px;height:40px;background:#5c5950;"></div>
<svg class="a" style="left:743px;top:737px;" width="22" height="22" viewBox="0 0 22 22"><defs><linearGradient id="pcg" x1="0" y1="0" x2="1" y2="1"><stop offset="0" stop-color="#21d789"/><stop offset="0.6" stop-color="#07c3f2"/><stop offset="1" stop-color="#fcf84a"/></linearGradient></defs><rect x="0" y="0" width="22" height="22" fill="url(#pcg)"/><rect x="2.5" y="2.5" width="17" height="17" fill="#000"/><text x="3.8" y="11.5" font-family="Liberation Sans" font-weight="bold" font-size="9.5" fill="#fff" letter-spacing="-0.3">PC</text><rect x="4.5" y="15.5" width="6" height="1.4" fill="#fff"/></svg>
<svg class="a" style="left:791px;top:736px;" width="24" height="23" viewBox="0 0 24 23"><rect x="7" y="2.5" width="16.5" height="18" fill="#fff" stroke="#41a5ee" stroke-width="0.8"/><path d="M10 6h11M10 9h11M10 12h11M10 15h11M10 18h11" stroke="#2b7cd3" stroke-width="1.2"/><path d="M0 2.5L14 0V23L0 20.5z" fill="#185abd"/><text x="1.2" y="15.5" font-family="Liberation Sans" font-weight="bold" font-size="10" fill="#fff">W</text></svg>
<div class="a" style="left:587px;top:766px;width:40px;height:2px;background:#76b9ed;"></div>
<div class="a" style="left:685px;top:766px;width:40px;height:2px;background:#76b9ed;"></div>
<div class="a" style="left:730px;top:766px;width:48px;height:2px;background:#76b9ed;"></div>
<div class="a" style="left:783px;top:766px;width:40px;height:2px;background:#76b9ed;"></div>
<svg class="a" style="left:1074.5px;top:742.5px;" width="13" height="9" viewBox="0 0 13 9"><path d="M0.7 8L6.5 1.5L12.3 8" fill="none" stroke="#fff" stroke-width="1.3"/></svg>
<svg class="a" style="left:1096.5px;top:739.5px;" width="18" height="17" viewBox="0 0 18 17"><rect x="0.6" y="1.6" width="14.5" height="12.5" fill="none" stroke="#fff" stroke-width="1.2"/><path d="M4 7.5a4 4 0 0 1 7-2M11.5 8.5a4 4 0 0 1-7 2" fill="none" stroke="#fff" stroke-width="1"/><circle cx="13.5" cy="13" r="3.3" fill="#f7931e"/></svg>
<svg class="a" style="left:1123px;top:740px;" width="14" height="16" viewBox="0 0 14 16"><path d="M7.5 14.5A4 4 0 0 1 11.5 10.5M4 14.5A7.5 7.5 0 0 1 11.5 7M0.6 14.5A10.9 10.9 0 0 1 11.5 3.6" fill="none" stroke="#fff" stroke-width="1.1"/><circle cx="11.5" cy="14.2" r="1.4" fill="#fff"/></svg>
<svg class="a" style="left:1145px;top:740px;" width="17" height="16" viewBox="0 0 17 16"><path d="M0.6 5.5h3l4-4v13l-4-4h-3z" fill="none" stroke="#fff" stroke-width="1.1"/><path d="M10 5a4 4 0 0 1 0 6M12.5 3a7 7 0 0 1 0 10M15 1a10 10 0 0 1 0 14" fill="none" stroke="#fff" stroke-width="1.1"/></svg>
<svg class="a" style="left:1171px;top:740px;" width="13" height="16" viewBox="0 0 13 16"><rect x="1" y="4" width="7.5" height="8" rx="2" fill="none" stroke="#fff" stroke-width="1.1"/><path d="M8.5 6.5L12 4.5V11.5L8.5 9.5" fill="none" stroke="#fff" stroke-width="1.1"/><path d="M2 1.5h5M2 14.5h5" stroke="#fff" stroke-width="1"/></svg>
<svg class="a" style="left:1192.5px;top:741px;" width="17" height="14" viewBox="0 0 17 14"><path d="M1.5 1v3M4.5 1v3M0.5 4h5v2.5a2.5 2.5 0 0 1-5 0z" fill="none" stroke="#fff" stroke-width="1"/><path d="M3 9v2.5h3" fill="none" stroke="#fff" stroke-width="1"/><rect x="5.5" y="4.5" width="10" height="7" fill="none" stroke="#fff" stroke-width="1.1"/><rect x="7" y="6" width="5" height="4" fill="#fff"/><rect x="15.5" y="6.5" width="1.5" height="3" fill="#fff"/></svg>
<div class="a t  " style="left:1219.0px;top:728.84px;font:12px/40px 'Liberation Sans',sans-serif;color:#ffffff;letter-spacing:-1.490px;">ENG</div>
<div class="a t  " style="left:1267.5px;top:718.84px;font:12px/40px 'Liberation Sans',sans-serif;color:#ffffff;letter-spacing:-0.790px;">10:11</div>
<div class="a t  " style="left:1254.8px;top:735.84px;font:12px/40px 'Liberation Sans',sans-serif;color:#ffffff;letter-spacing:-0.175px;">21/3/2023</div>
<svg class="a" style="left:1324.5px;top:739.5px;" width="25" height="25" viewBox="0 0 25 25"><path d="M1 1h16v11H7l-3 3v-3H1z" fill="#fff"/><path d="M3.5 4h11M3.5 6.5h11M3.5 9h8" stroke="#3a2d28" stroke-width="1"/><circle cx="15.5" cy="16.5" r="7" fill="#2f2723" stroke="#bfbfbf" stroke-width="1.2"/><text x="12" y="20.5" font-family="Liberation Sans" font-weight="bold" font-size="11" fill="#fff">2</text></svg>
<div class="a" style="left:1362px;top:728px;width:1px;height:40px;background:#6d6560;"></div></body></html>
